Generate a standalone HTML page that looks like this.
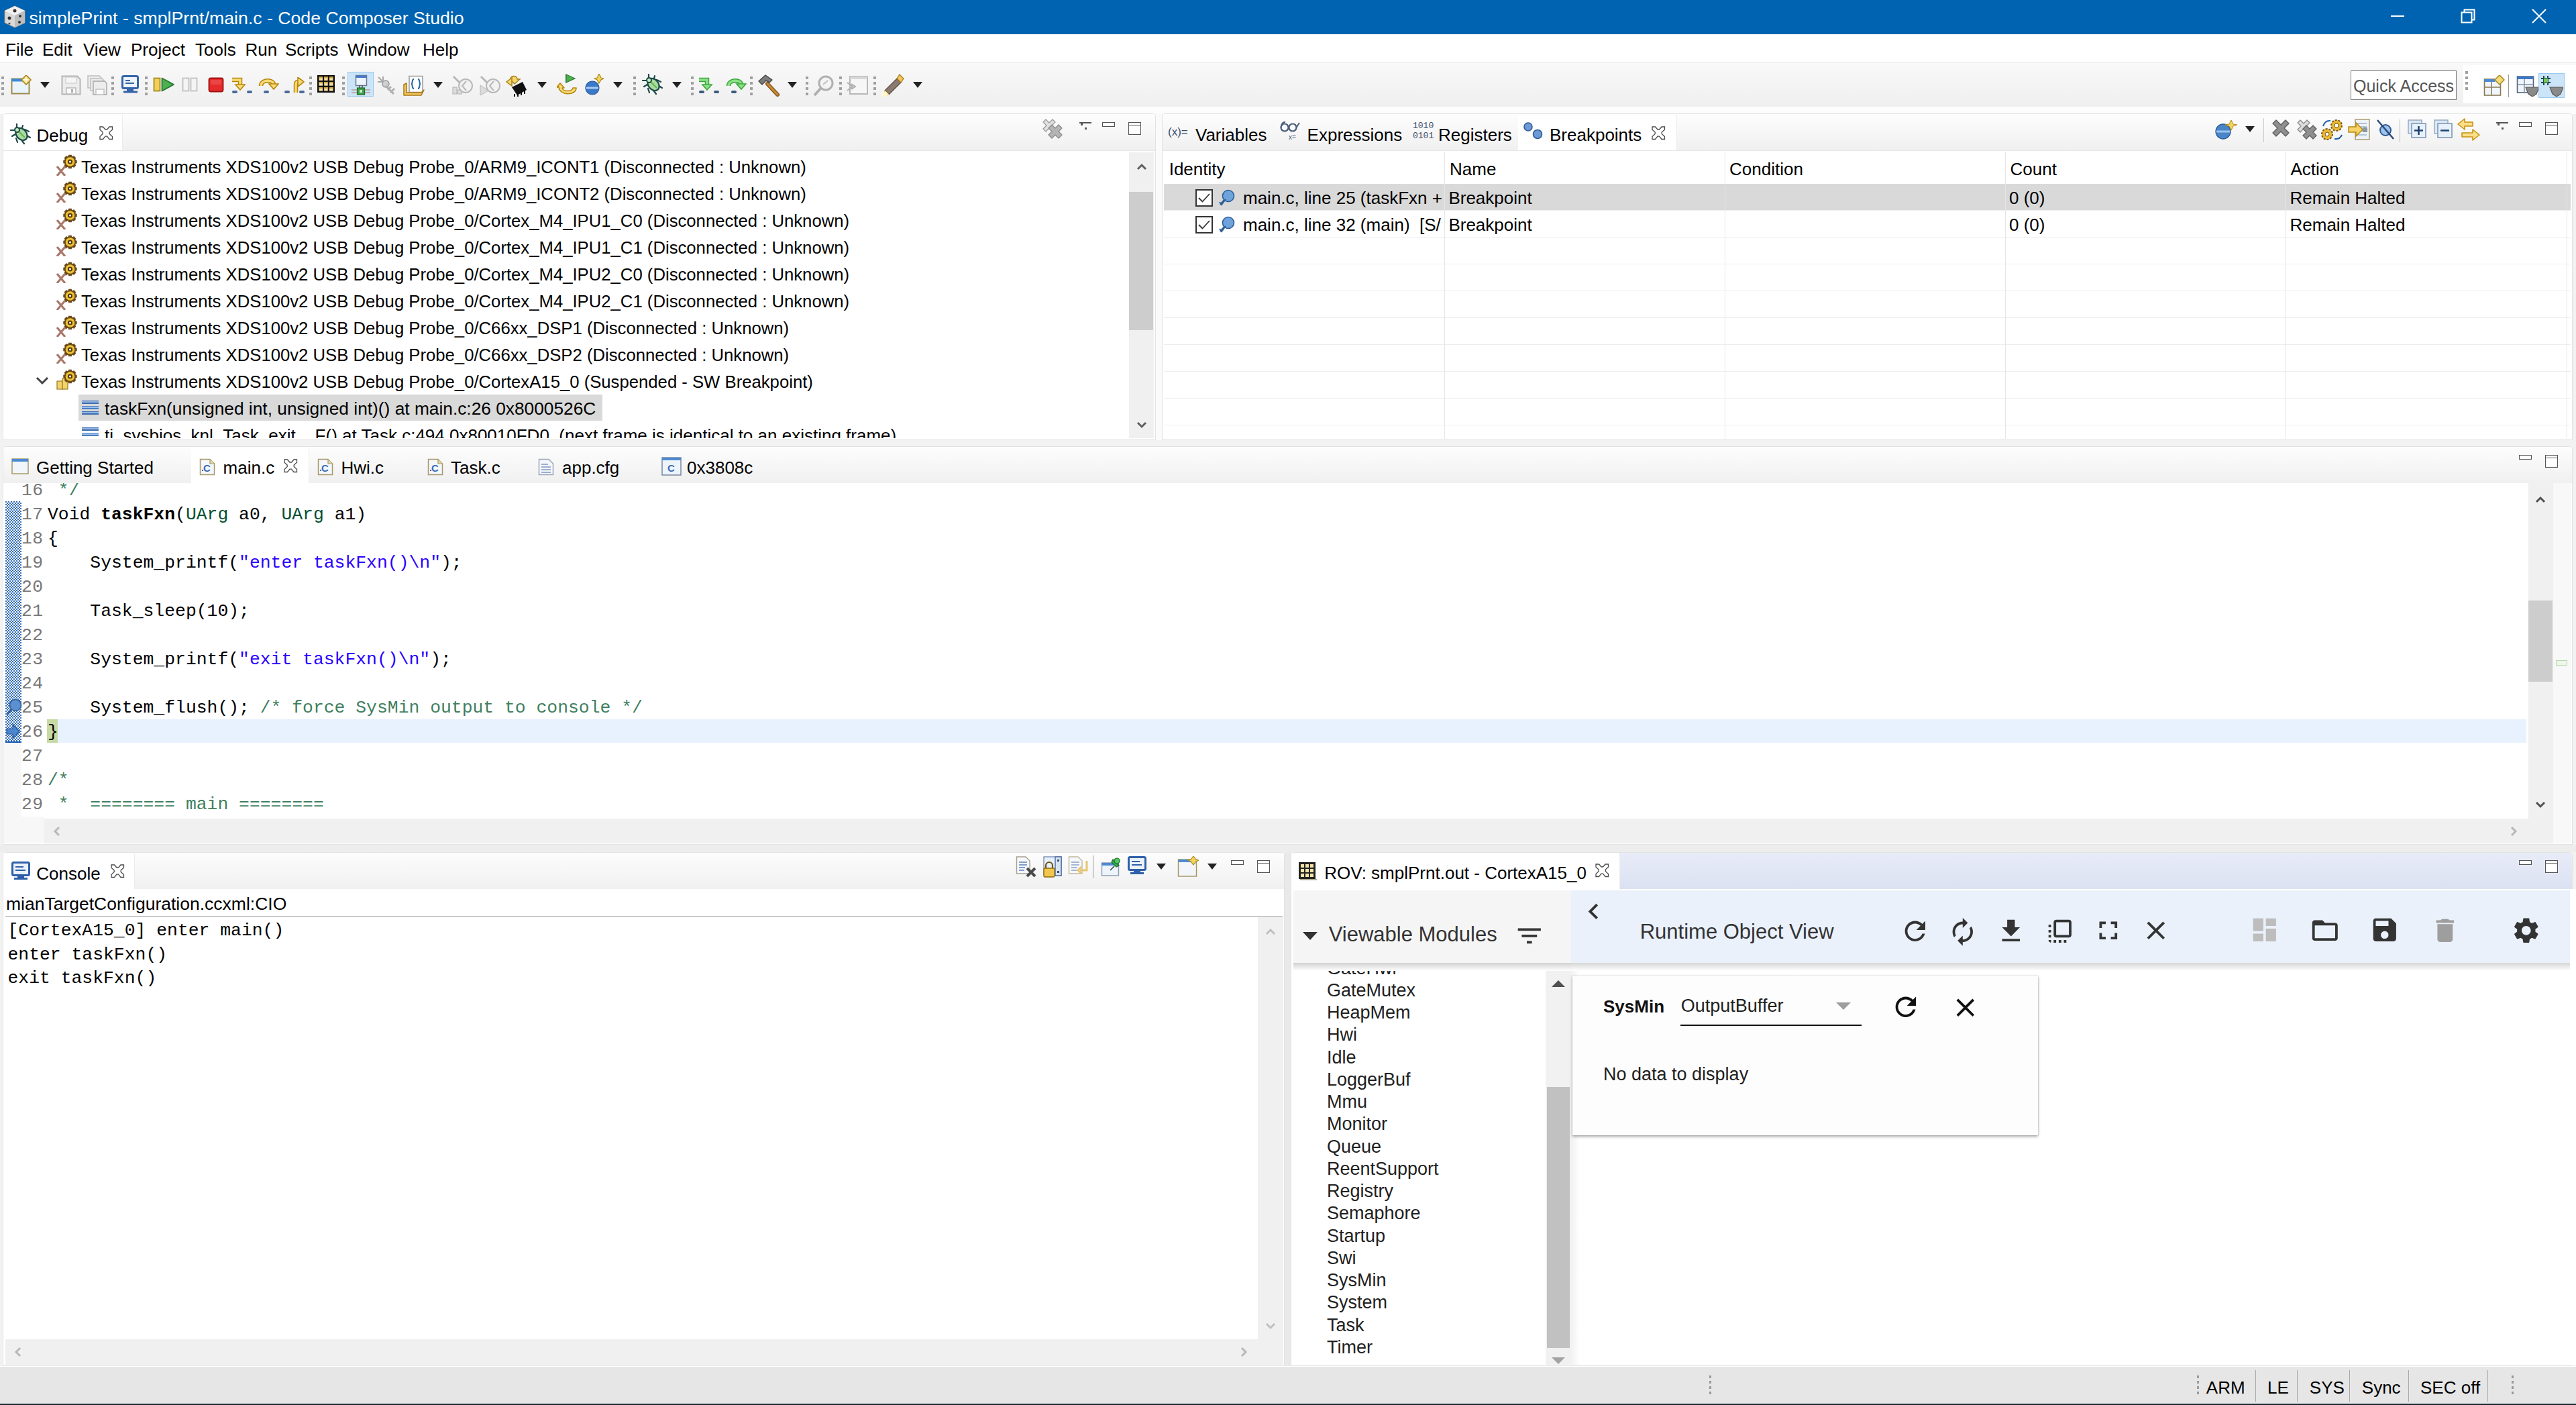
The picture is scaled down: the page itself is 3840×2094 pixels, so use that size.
<!DOCTYPE html>
<html><head><meta charset="utf-8"><title>Code Composer Studio</title>
<style>
html,body{margin:0;padding:0}
body{width:3840px;height:2094px;overflow:hidden;position:relative;background:#f2f2f2;font-family:"Liberation Sans",sans-serif}
.a{position:absolute}
.tS{position:absolute;white-space:pre;font-family:"Liberation Sans",sans-serif}
.tM{position:absolute;white-space:pre;font-family:"Liberation Mono",monospace}
</style></head><body>

<div class="a" style="left:0px;top:0px;width:3840px;height:51px;background:#0063b1"></div>
<svg class="a" style="left:4px;top:7px" width="36" height="36" viewBox="0 0 36 36"><path d="M18 2 L33 9 L33 27 L18 34 L3 27 L3 9 Z" fill="#d9d9d9" stroke="#8a8a8a" stroke-width="1"/>
<path d="M18 2 L33 9 L18 16 L3 9 Z" fill="#f2f2f2"/><path d="M18 16 L33 9 L33 27 L18 34 Z" fill="#bdbdbd"/>
<circle cx="18" cy="9" r="2.5" fill="#333"/><circle cx="10" cy="20" r="2.5" fill="#333"/><circle cx="26" cy="17" r="2" fill="#333"/><circle cx="25" cy="26" r="2" fill="#333"/><circle cx="10" cy="28" r="1.6" fill="#555"/></svg>
<div class="tS" style="left:43.5px;top:14.1px;font-size:26.7px;line-height:26.7px;color:#fff">simplePrint - smplPrnt/main.c - Code Composer Studio</div>
<div class="a" style="left:3564px;top:23px;width:20px;height:2px;background:#fff"></div>
<svg class="a" style="left:3666px;top:12px" width="26" height="26" viewBox="0 0 26 26"><rect x="3.5" y="6.5" width="15" height="15" fill="none" stroke="#fff" stroke-width="2"/><path d="M7.5 6.5 V2.5 H22.5 V17.5 H18.5" fill="none" stroke="#fff" stroke-width="2"/></svg>
<svg class="a" style="left:3773px;top:12px" width="24" height="24" viewBox="0 0 24 24"><path d="M2 2 L22 22 M22 2 L2 22" stroke="#fff" stroke-width="2"/></svg>
<div class="a" style="left:0px;top:51px;width:3840px;height:42px;background:#fff"></div>
<div class="tS" style="left:8.0px;top:61.0px;font-size:26px;line-height:26px">File</div>
<div class="tS" style="left:63.0px;top:61.0px;font-size:26px;line-height:26px">Edit</div>
<div class="tS" style="left:124.0px;top:61.0px;font-size:26px;line-height:26px">View</div>
<div class="tS" style="left:195.0px;top:61.0px;font-size:26px;line-height:26px">Project</div>
<div class="tS" style="left:291.0px;top:61.0px;font-size:26px;line-height:26px">Tools</div>
<div class="tS" style="left:365.5px;top:61.0px;font-size:26px;line-height:26px">Run</div>
<div class="tS" style="left:425.0px;top:61.0px;font-size:26px;line-height:26px">Scripts</div>
<div class="tS" style="left:518.0px;top:61.0px;font-size:26px;line-height:26px">Window</div>
<div class="tS" style="left:630.0px;top:61.0px;font-size:26px;line-height:26px">Help</div>
<div class="a" style="left:0px;top:93px;width:3840px;height:66px;background:linear-gradient(#f9f9f9,#efefef);border-top:1px solid #ececec;box-sizing:border-box"></div>
<div class="a" style="left:0px;top:159px;width:3840px;height:11px;background:#fdfdfd"></div>
<div class="a" style="left:2px;top:114px;width:4px;height:4px;background:#a0a0a0"></div>
<div class="a" style="left:2px;top:122px;width:4px;height:4px;background:#a0a0a0"></div>
<div class="a" style="left:2px;top:130px;width:4px;height:4px;background:#a0a0a0"></div>
<div class="a" style="left:2px;top:138px;width:4px;height:4px;background:#a0a0a0"></div>
<svg class="a" style="left:16px;top:112px" width="31" height="29" viewBox="0 0 31 29"><rect x="1.5" y="5.5" width="26" height="22" fill="#eaf4fc" stroke="#a08a50" stroke-width="2"/><rect x="1.5" y="5.5" width="20" height="4" fill="#3f8ad8"/><path d="M23 0 L30 7 L23 14 L16 7 Z" fill="#f6dc78" stroke="#a88820" stroke-width="1.6"/><path d="M23 3 V11 M19 7 H27" stroke="#fff" stroke-width="1.5"/></svg>
<svg class="a" style="left:60px;top:122px" width="14" height="9" viewBox="0 0 14 9"><path d="M0 0 H14 L7 9 Z" fill="#222"/></svg>
<svg class="a" style="left:91px;top:112px" width="30" height="30" viewBox="0 0 30 30"><path d="M1.5 1.5 H24 L28.5 6 V28.5 H1.5 Z" fill="#ececec" stroke="#b5b5b5" stroke-width="2"/><rect x="7" y="3" width="16" height="9" fill="#f6f6f6" stroke="#c8c8c8"/><rect x="8" y="19" width="14" height="9" fill="#fafafa" stroke="#b8b8b8" stroke-width="1.5"/><rect x="15" y="21" width="3" height="5" fill="#b0b0b0"/></svg>
<svg class="a" style="left:130px;top:112px" width="30" height="30" viewBox="0 0 30 30"><path d="M1 1 H18 L21 4 V19 H1 Z" fill="#ececec" stroke="#c0c0c0" stroke-width="1.5"/><path d="M5 5 H22 L25 8 V23 H5 Z" fill="#ececec" stroke="#c0c0c0" stroke-width="1.5"/><path d="M9 9 H26 L29 12 V29 H9 Z" fill="#ececec" stroke="#b5b5b5" stroke-width="1.8"/><rect x="13" y="21" width="12" height="8" fill="#fafafa" stroke="#b8b8b8" stroke-width="1.2"/></svg>
<div class="a" style="left:166px;top:114px;width:4px;height:4px;background:#a0a0a0"></div>
<div class="a" style="left:166px;top:122px;width:4px;height:4px;background:#a0a0a0"></div>
<div class="a" style="left:166px;top:130px;width:4px;height:4px;background:#a0a0a0"></div>
<div class="a" style="left:166px;top:138px;width:4px;height:4px;background:#a0a0a0"></div>
<svg class="a" style="left:181px;top:112px" width="27" height="27" viewBox="0 0 27 27"><rect x="1.5" y="1.5" width="23" height="18" rx="2" fill="#eef4fb" stroke="#3565a8" stroke-width="3"/><path d="M6 8 H13 M6 12 H19" stroke="#3565a8" stroke-width="2"/><rect x="8" y="21" width="10" height="3" fill="#3565a8"/><rect x="3" y="23.5" width="21" height="3" fill="#3565a8"/></svg>
<div class="a" style="left:216px;top:114px;width:4px;height:4px;background:#a0a0a0"></div>
<div class="a" style="left:216px;top:122px;width:4px;height:4px;background:#a0a0a0"></div>
<div class="a" style="left:216px;top:130px;width:4px;height:4px;background:#a0a0a0"></div>
<div class="a" style="left:216px;top:138px;width:4px;height:4px;background:#a0a0a0"></div>
<svg class="a" style="left:228px;top:115px" width="33" height="22" viewBox="0 0 33 22"><rect x="1.5" y="1.5" width="9" height="19" fill="#f2cf5a" stroke="#a88a20" stroke-width="1.8"/><path d="M13.5 1.5 L31 11 L13.5 20.5 Z" fill="#4caf50" stroke="#2a7a30" stroke-width="1.8" stroke-linejoin="round"/></svg>
<svg class="a" style="left:271px;top:115px" width="24" height="22" viewBox="0 0 24 22"><rect x="1.5" y="1.5" width="9" height="19" fill="#f4f4f4" stroke="#c0c0c0" stroke-width="1.8"/><rect x="13.5" y="1.5" width="9" height="19" fill="#f4f4f4" stroke="#c0c0c0" stroke-width="1.8"/></svg>
<svg class="a" style="left:310px;top:115px" width="24" height="23" viewBox="0 0 24 23"><rect x="1.5" y="1.5" width="21" height="20" rx="2.5" fill="#e52a2a" stroke="#a01010" stroke-width="1.8"/><rect x="4" y="4" width="16" height="7" fill="#f05858" opacity="0.6"/></svg>
<svg class="a" style="left:345px;top:115px" width="32" height="25" viewBox="0 0 32 25"><path d="M1 4 H13 V12" fill="none" stroke="#b8860b" stroke-width="6.5" stroke-linejoin="miter"/><path d="M1 4 H13 V12" fill="none" stroke="#f8dc78" stroke-width="3.5" stroke-linejoin="miter"/><path d="M6 11 H20 L13 19 Z" fill="#f8dc78" stroke="#b8860b" stroke-width="1.6" stroke-linejoin="miter"/><rect x="1" y="20" width="8" height="4" rx="2" fill="#4a6a9a"/><rect x="23" y="20" width="8" height="4" rx="2" fill="#4a6a9a"/></svg>
<svg class="a" style="left:384px;top:115px" width="32" height="25" viewBox="0 0 32 25"><path d="M5 13 C5 3 24 3 24 11" fill="none" stroke="#b8860b" stroke-width="6.5" stroke-linejoin="miter"/><path d="M5 13 C5 3 24 3 24 11" fill="none" stroke="#f8dc78" stroke-width="3.5" stroke-linejoin="miter"/><path d="M17 10 H31 L24 18 Z" fill="#f8dc78" stroke="#b8860b" stroke-width="1.6" stroke-linejoin="miter"/><rect x="9" y="20" width="8" height="4" rx="2" fill="#4a6a9a"/></svg>
<svg class="a" style="left:423px;top:115px" width="32" height="25" viewBox="0 0 32 25"><path d="M18 23 V11 C18 8 19 7 22 7" fill="none" stroke="#b8860b" stroke-width="6.5" stroke-linejoin="miter"/><path d="M18 23 V11 C18 8 19 7 22 7" fill="none" stroke="#f8dc78" stroke-width="3.5" stroke-linejoin="miter"/><path d="M21 0 L30 7 L21 14 Z" fill="#f8dc78" stroke="#b8860b" stroke-width="1.6" stroke-linejoin="miter"/><rect x="1" y="20" width="8" height="4" rx="2" fill="#4a6a9a"/><rect x="23" y="20" width="8" height="4" rx="2" fill="#4a6a9a"/></svg>
<div class="a" style="left:461px;top:114px;width:4px;height:4px;background:#a0a0a0"></div>
<div class="a" style="left:461px;top:122px;width:4px;height:4px;background:#a0a0a0"></div>
<div class="a" style="left:461px;top:130px;width:4px;height:4px;background:#a0a0a0"></div>
<div class="a" style="left:461px;top:138px;width:4px;height:4px;background:#a0a0a0"></div>
<svg class="a" style="left:472px;top:111px" width="29" height="29" viewBox="0 0 29 29"><rect x="1" y="1" width="26" height="26" fill="#111"/><g fill="#f6e2a6"><rect x="3.5" y="3.5" width="5.5" height="5.5"/><rect x="11.2" y="3.5" width="5.5" height="5.5"/><rect x="19" y="3.5" width="5.5" height="5.5"/><rect x="3.5" y="11.2" width="5.5" height="5.5"/><rect x="11.2" y="11.2" width="5.5" height="5.5"/><rect x="19" y="11.2" width="5.5" height="5.5"/><rect x="3.5" y="19" width="5.5" height="5.5"/><rect x="11.2" y="19" width="5.5" height="5.5"/><rect x="19" y="19" width="5.5" height="5.5"/></g><g fill="#d4a63a"><rect x="3.5" y="3.5" width="5.5" height="2"/><rect x="11.2" y="3.5" width="5.5" height="2"/><rect x="19" y="3.5" width="5.5" height="2"/><rect x="3.5" y="11.2" width="5.5" height="2"/><rect x="11.2" y="11.2" width="5.5" height="2"/><rect x="19" y="11.2" width="5.5" height="2"/><rect x="3.5" y="19" width="5.5" height="2"/><rect x="11.2" y="19" width="5.5" height="2"/><rect x="19" y="19" width="5.5" height="2"/></g></svg>
<div class="a" style="left:510px;top:114px;width:4px;height:4px;background:#a0a0a0"></div>
<div class="a" style="left:510px;top:122px;width:4px;height:4px;background:#a0a0a0"></div>
<div class="a" style="left:510px;top:130px;width:4px;height:4px;background:#a0a0a0"></div>
<div class="a" style="left:510px;top:138px;width:4px;height:4px;background:#a0a0a0"></div>
<div class="a" style="left:518px;top:107px;width:39px;height:37px;box-sizing:border-box;background:#cce4f7;border:1px solid #99c9ef"></div>
<svg class="a" style="left:522px;top:110px" width="32" height="32" viewBox="0 0 32 32"><rect x="8.5" y="2.5" width="16" height="15" fill="#eef4fb" stroke="#6a7a90" stroke-width="1.5"/><rect x="8.5" y="2.5" width="16" height="3.5" fill="#4a7ac8"/><path d="M2 24 H30 M2 28 H30" stroke="#b89a9a" stroke-width="1.5"/><path d="M14 17 V22 M18 17 V22" stroke="#555" stroke-width="1.5"/><rect x="10.5" y="21" width="11" height="10" fill="#3aa04a" stroke="#1e6a2a" stroke-width="1.2"/><rect x="14" y="24" width="4" height="4" fill="#cfe8c0"/></svg>
<svg class="a" style="left:561px;top:112px" width="32" height="30" viewBox="0 0 32 30"><path d="M3 3 L12 12 M10 2 V8 M2 10 H8" stroke="#a8a8a8" stroke-width="2"/><circle cx="14" cy="13" r="5" fill="#d0d0d0" stroke="#9a9a9a" stroke-width="1.5"/><path d="M14 16 L26 28 M17 22 L22 17 M21 26 L27 20" stroke="#b0b0b0" stroke-width="3"/></svg>
<svg class="a" style="left:601px;top:112px" width="32" height="31" viewBox="0 0 32 31"><rect x="9" y="1.5" width="20" height="24" fill="#fff" stroke="#9a9a9a" stroke-width="1.5"/><path d="M16 6 C12 6 15 13 12 13 C15 13 12 20 16 20 M22 6 C26 6 23 13 26 13 C23 13 26 20 22 20" fill="none" stroke="#1f6aa8" stroke-width="2"/><path d="M1 30 V14 L5 12 V26 H27 L31 22 L27 30 Z" fill="#f2c85a" stroke="#a8781a" stroke-width="1.5" stroke-linejoin="round"/></svg>
<svg class="a" style="left:646px;top:122px" width="14" height="9" viewBox="0 0 14 9"><path d="M0 0 H14 L7 9 Z" fill="#222"/></svg>
<svg class="a" style="left:673px;top:112px" width="35" height="31" viewBox="0 0 35 31"><path d="M3 2 L12 11" stroke="#b8b8b8" stroke-width="3"/><rect x="2" y="18" width="6" height="10" fill="#dcdcdc" stroke="#b0b0b0"/><rect x="9" y="22" width="6" height="6" fill="#dcdcdc" stroke="#b0b0b0"/><circle cx="21" cy="16" r="10" fill="#f2f2f2" stroke="#b8b8b8" stroke-width="2"/><path d="M22 9 L16 16 L22 23" fill="none" stroke="#b8b8b8" stroke-width="2"/></svg>
<svg class="a" style="left:714px;top:112px" width="33" height="31" viewBox="0 0 33 31"><path d="M3 2 L12 11" stroke="#b8b8b8" stroke-width="3"/><path d="M2 15 L14 23 L2 30 Z" fill="#dcdcdc" stroke="#b8b8b8"/><circle cx="21" cy="16" r="10" fill="#f2f2f2" stroke="#b8b8b8" stroke-width="2"/><path d="M22 9 L16 16 L22 23" fill="none" stroke="#b8b8b8" stroke-width="2"/></svg>
<svg class="a" style="left:753px;top:110px" width="34" height="34" viewBox="0 0 34 34"><path d="M8 8 C8 2 18 2 18 8 H22 L14 15 L8 9 Z" fill="#f6d86a" stroke="#a8801a" stroke-width="1.5"/><path d="M2 12 L10 6 L10 18 Z" fill="#f6d86a" stroke="#a8801a" stroke-width="1.5"/><path d="M10 20 L26 12 L32 24 L18 32 Z" fill="#111"/><path d="M14 30 V34 M19 29 V34 M24 27 V32 M29 25 V30" stroke="#111" stroke-width="2"/></svg>
<svg class="a" style="left:801px;top:122px" width="14" height="9" viewBox="0 0 14 9"><path d="M0 0 H14 L7 9 Z" fill="#222"/></svg>
<svg class="a" style="left:830px;top:109px" width="32" height="35" viewBox="0 0 32 35"><path d="M14 2 V14" stroke="#2a7a30" stroke-width="2"/><path d="M14 2 L27 8 L14 14 Z" fill="#4caf50" stroke="#2a7a30" stroke-width="1.2"/><path d="M3 20 C3 34 29 34 29 22 L24 22 C24 28 8 28 8 22 L11 22 L5 15 L-1 22 Z" fill="#f8dc78" stroke="#b8860b" stroke-width="1.6" stroke-linejoin="round"/></svg>
<svg class="a" style="left:872px;top:110px" width="28" height="34" viewBox="0 0 28 34"><circle cx="11" cy="21" r="10" fill="#3b78c8" stroke="#2a5a9a" stroke-width="1.2"/><path d="M2 21 H20" stroke="#a8cdf2" stroke-width="3"/><path d="M21 0 L24 6 L28 7 L24 9 L21 14 L18 9 L14 7 L18 6 Z" fill="#f4d35e" stroke="#a88a20" stroke-width="1.2"/></svg>
<svg class="a" style="left:914px;top:122px" width="14" height="9" viewBox="0 0 14 9"><path d="M0 0 H14 L7 9 Z" fill="#222"/></svg>
<div class="a" style="left:944px;top:114px;width:4px;height:4px;background:#a0a0a0"></div>
<div class="a" style="left:944px;top:122px;width:4px;height:4px;background:#a0a0a0"></div>
<div class="a" style="left:944px;top:130px;width:4px;height:4px;background:#a0a0a0"></div>
<div class="a" style="left:944px;top:138px;width:4px;height:4px;background:#a0a0a0"></div>
<svg class="a" style="left:957px;top:110px" width="32" height="32" viewBox="0 0 32 32"><g stroke="#1d4848" stroke-width="2.2" fill="none" stroke-linecap="round"><path d="M10 1 V8"/><path d="M19 3 Q19 6 16 9"/><path d="M1 10 H7"/><path d="M3 19 L8 16"/><path d="M9 22 L11 28"/><path d="M18 26 L21 30"/><path d="M22 9 L28 12"/><path d="M25 18 L30 21"/></g><ellipse cx="17" cy="16" rx="7.5" ry="10" transform="rotate(-40 17 16)" fill="#a8dca0" stroke="#1d4848" stroke-width="2.2"/><path d="M12 11 L22 21" stroke="#6ab04c" stroke-width="2"/><circle cx="10.5" cy="9.5" r="3.5" fill="#c8eec0" stroke="#1d4848" stroke-width="2"/></svg>
<svg class="a" style="left:1002px;top:122px" width="14" height="9" viewBox="0 0 14 9"><path d="M0 0 H14 L7 9 Z" fill="#222"/></svg>
<div class="a" style="left:1030px;top:114px;width:4px;height:4px;background:#a0a0a0"></div>
<div class="a" style="left:1030px;top:122px;width:4px;height:4px;background:#a0a0a0"></div>
<div class="a" style="left:1030px;top:130px;width:4px;height:4px;background:#a0a0a0"></div>
<div class="a" style="left:1030px;top:138px;width:4px;height:4px;background:#a0a0a0"></div>
<svg class="a" style="left:1041px;top:115px" width="32" height="25" viewBox="0 0 32 25"><path d="M1 4 H13 V12" fill="none" stroke="#3aa83a" stroke-width="6.5" stroke-linejoin="miter"/><path d="M1 4 H13 V12" fill="none" stroke="#8ee08a" stroke-width="3.5" stroke-linejoin="miter"/><path d="M6 11 H20 L13 19 Z" fill="#8ee08a" stroke="#3aa83a" stroke-width="1.6" stroke-linejoin="miter"/><rect x="1" y="20" width="8" height="4" rx="2" fill="#3a5a7a"/><rect x="23" y="20" width="8" height="4" rx="2" fill="#3a5a7a"/></svg>
<svg class="a" style="left:1081px;top:115px" width="32" height="25" viewBox="0 0 32 25"><path d="M5 13 C5 3 24 3 24 11" fill="none" stroke="#3aa83a" stroke-width="6.5" stroke-linejoin="miter"/><path d="M5 13 C5 3 24 3 24 11" fill="none" stroke="#8ee08a" stroke-width="3.5" stroke-linejoin="miter"/><path d="M17 10 H31 L24 18 Z" fill="#8ee08a" stroke="#3aa83a" stroke-width="1.6" stroke-linejoin="miter"/><rect x="9" y="20" width="8" height="4" rx="2" fill="#3a5a7a"/></svg>
<div class="a" style="left:1118px;top:114px;width:4px;height:4px;background:#a0a0a0"></div>
<div class="a" style="left:1118px;top:122px;width:4px;height:4px;background:#a0a0a0"></div>
<div class="a" style="left:1118px;top:130px;width:4px;height:4px;background:#a0a0a0"></div>
<div class="a" style="left:1118px;top:138px;width:4px;height:4px;background:#a0a0a0"></div>
<svg class="a" style="left:1129px;top:111px" width="33" height="33" viewBox="0 0 33 33"><path d="M15 14 L30 30" stroke="#8a5a20" stroke-width="6" stroke-linecap="round"/><path d="M15 14 L30 30" stroke="#c8883a" stroke-width="3" stroke-linecap="round"/><path d="M2 10 L12 1 L22 8 L18 12 L13 9 L7 15 Z" fill="#7a7a7a" stroke="#4a4a4a" stroke-width="1.5" stroke-linejoin="round"/></svg>
<svg class="a" style="left:1174px;top:122px" width="14" height="9" viewBox="0 0 14 9"><path d="M0 0 H14 L7 9 Z" fill="#222"/></svg>
<div class="a" style="left:1201px;top:114px;width:4px;height:4px;background:#a0a0a0"></div>
<div class="a" style="left:1201px;top:122px;width:4px;height:4px;background:#a0a0a0"></div>
<div class="a" style="left:1201px;top:130px;width:4px;height:4px;background:#a0a0a0"></div>
<div class="a" style="left:1201px;top:138px;width:4px;height:4px;background:#a0a0a0"></div>
<svg class="a" style="left:1212px;top:111px" width="33" height="33" viewBox="0 0 33 33"><circle cx="19" cy="13" r="10" fill="#f4f4f4" stroke="#b0b0b0" stroke-width="3"/><path d="M12 20 L2 31" stroke="#b0b0b0" stroke-width="4"/><path d="M15 15 L22 9" stroke="#c0c0c0" stroke-width="2"/></svg>
<div class="a" style="left:1251px;top:114px;width:4px;height:4px;background:#a0a0a0"></div>
<div class="a" style="left:1251px;top:122px;width:4px;height:4px;background:#a0a0a0"></div>
<div class="a" style="left:1251px;top:130px;width:4px;height:4px;background:#a0a0a0"></div>
<div class="a" style="left:1251px;top:138px;width:4px;height:4px;background:#a0a0a0"></div>
<svg class="a" style="left:1261px;top:111px" width="34" height="32" viewBox="0 0 34 32"><rect x="6" y="3" width="26" height="26" fill="#f6f6f6" stroke="#b8b8b8" stroke-width="2"/><rect x="6" y="3" width="26" height="4" fill="#d8d8d8"/><path d="M2 12 L10 18 L2 24 M8 14 L14 18 L8 22" fill="none" stroke="#b0b0b0" stroke-width="2"/></svg>
<div class="a" style="left:1302px;top:114px;width:4px;height:4px;background:#a0a0a0"></div>
<div class="a" style="left:1302px;top:122px;width:4px;height:4px;background:#a0a0a0"></div>
<div class="a" style="left:1302px;top:130px;width:4px;height:4px;background:#a0a0a0"></div>
<div class="a" style="left:1302px;top:138px;width:4px;height:4px;background:#a0a0a0"></div>
<svg class="a" style="left:1313px;top:109px" width="35" height="36" viewBox="0 0 35 36"><path d="M6 26 L24 8 L30 14 L12 32 Z" fill="#8a7a70" stroke="#5a4a40" stroke-width="1.2"/><path d="M24 8 L28 2 L34 8 L30 14 Z" fill="#f2c45a" stroke="#a87a1a" stroke-width="1.2"/><path d="M6 26 L12 32 L3 35 Z" fill="#fff6b8" stroke="#e8d070"/><circle cx="5" cy="32" r="4" fill="#fffbd8" opacity="0.8"/></svg>
<svg class="a" style="left:1361px;top:122px" width="14" height="9" viewBox="0 0 14 9"><path d="M0 0 H14 L7 9 Z" fill="#222"/></svg>
<div class="a" style="left:3504px;top:105px;width:158px;height:44px;box-sizing:border-box;background:#fff;border:1px solid #7a7a7a"></div>
<div class="tS" style="left:3508.0px;top:115.8px;font-size:25px;line-height:25px;color:#555">Quick Access</div>
<div class="a" style="left:3672px;top:97px;width:168px;height:57px;background:#fff"></div>
<div class="a" style="left:3675px;top:106px;width:4px;height:4px;background:#a0a0a0"></div>
<div class="a" style="left:3675px;top:114px;width:4px;height:4px;background:#a0a0a0"></div>
<div class="a" style="left:3675px;top:122px;width:4px;height:4px;background:#a0a0a0"></div>
<div class="a" style="left:3675px;top:130px;width:4px;height:4px;background:#a0a0a0"></div>
<div class="a" style="left:3739px;top:111px;width:1px;height:34px;background:#9a9a9a"></div>
<svg class="a" style="left:3702px;top:112px" width="32" height="32" viewBox="0 0 32 32"><rect x="1.5" y="6" width="24" height="24" fill="#f0f6fb" stroke="#8a7a50" stroke-width="1.6"/><rect x="1.5" y="6" width="16" height="4" fill="#4d8ad0"/><path d="M1.5 18 H25 M12 10 V30" stroke="#8a7a50" stroke-width="1.5"/><path d="M24 0 L31 7 L24 14 L17 7 Z" fill="#f6dc78" stroke="#a88820" stroke-width="1.5"/></svg>
<svg class="a" style="left:3751px;top:112px" width="34" height="32" viewBox="0 0 34 32"><rect x="1.5" y="2" width="24" height="24" fill="#f0f6fb" stroke="#55627a" stroke-width="1.6"/><rect x="1.5" y="2" width="24" height="4" fill="#3b78c8"/><path d="M1.5 14 H25 M12 6 V26" stroke="#8090a8" stroke-width="1.5"/><path d="M14 18 L34 18 L30 28 L24 32 L18 28 Z" fill="#8a8a8a" stroke="#5a5a5a" stroke-width="1.2"/></svg>
<div class="a" style="left:3784px;top:109px;width:39px;height:37px;box-sizing:border-box;background:#cce4f7;border:1px solid #99c9ef"></div>
<svg class="a" style="left:3787px;top:112px" width="34" height="32" viewBox="0 0 34 32"><path d="M5 1 V15 M11 1 V15 M1 5 H15 M1 11 H15" stroke="#1a4a4a" stroke-width="2"/><rect x="5" y="5" width="6" height="6" fill="#7ac858"/><path d="M14 18 L34 18 L30 28 L24 32 L18 28 Z" fill="#8a8a8a" stroke="#5a5a5a" stroke-width="1.2"/></svg>
<div class="a" style="left:4px;top:169px;width:1719px;height:487px;box-sizing:border-box;border:1px solid #e2e2e2;border-radius:5px 5px 0 0;background:#fff"></div>
<div class="a" style="left:5px;top:170px;width:1717px;height:54px;border-radius:4px 4px 0 0;background:linear-gradient(#fdfdfd,#f0f0f0);border-bottom:1px solid #e6e6e6"></div>
<div class="a" style="left:5px;top:170px;width:177px;height:54px;background:#fff;border-radius:4px 4px 0 0;border-right:1px solid #ececec"></div>
<svg class="a" style="left:15px;top:184px" width="32" height="32" viewBox="0 0 32 32"><g stroke="#1d4848" stroke-width="2.2" fill="none" stroke-linecap="round"><path d="M10 1 V8"/><path d="M19 3 Q19 6 16 9"/><path d="M1 10 H7"/><path d="M3 19 L8 16"/><path d="M9 22 L11 28"/><path d="M18 26 L21 30"/><path d="M22 9 L28 12"/><path d="M25 18 L30 21"/></g><ellipse cx="17" cy="16" rx="7.5" ry="10" transform="rotate(-40 17 16)" fill="#a8dca0" stroke="#1d4848" stroke-width="2.2"/><path d="M12 11 L22 21" stroke="#6ab04c" stroke-width="2"/><circle cx="10.5" cy="9.5" r="3.5" fill="#c8eec0" stroke="#1d4848" stroke-width="2"/></svg>
<div class="tS" style="left:54.6px;top:188.5px;font-size:26px;line-height:26px">Debug</div>
<svg class="a" style="left:148px;top:188px" width="21" height="21" viewBox="0 0 21 21"><path d="M1 1 H5.5 L9 5 H11.5 L15 1 H19.5 V5.2 L15.2 9 V11.5 L19.5 15.5 V19.5 H15 L11.5 15.2 H9 L5.5 19.5 H1 V15.5 L5.2 11.5 V9 L1 5.2 Z" fill="#fff" stroke="#4a4a4a" stroke-width="1.3" stroke-linejoin="miter"/></svg>
<svg class="a" style="left:83px;top:230px" width="32" height="32" viewBox="0 0 32 32"><path d="M14 20 L17 17" stroke="#a07060" stroke-width="3"/><path d="M2 18 L14 32 M14 18 L2 32" stroke="#a87868" stroke-width="3.2"/><path d="M18.9 2.6 L19.2 0.8 L23.8 0.8 L24.1 2.6 L25.6 3.2 L27.1 2.1 L30.4 5.4 L29.3 6.9 L29.9 8.4 L31.7 8.7 L31.7 13.3 L29.9 13.6 L29.3 15.1 L30.4 16.6 L27.1 19.9 L25.6 18.8 L24.1 19.4 L23.8 21.2 L19.2 21.2 L18.9 19.4 L17.4 18.8 L15.9 19.9 L12.6 16.6 L13.7 15.1 L13.1 13.6 L11.3 13.3 L11.3 8.7 L13.1 8.4 L13.7 6.9 L12.6 5.4 L15.9 2.1 L17.4 3.2 Z" fill="#6b4a1a"/><circle cx="21.5" cy="11" r="6.8" fill="#eec434"/><circle cx="21.5" cy="11" r="3.6" fill="#5a3a10"/><circle cx="21.5" cy="11" r="1.5" fill="#fff"/></svg>
<div class="tS" style="left:121.0px;top:237.3px;font-size:25.7px;line-height:25.7px">Texas Instruments XDS100v2 USB Debug Probe_0/ARM9_ICONT1 (Disconnected : Unknown)</div>
<svg class="a" style="left:83px;top:270px" width="32" height="32" viewBox="0 0 32 32"><path d="M14 20 L17 17" stroke="#a07060" stroke-width="3"/><path d="M2 18 L14 32 M14 18 L2 32" stroke="#a87868" stroke-width="3.2"/><path d="M18.9 2.6 L19.2 0.8 L23.8 0.8 L24.1 2.6 L25.6 3.2 L27.1 2.1 L30.4 5.4 L29.3 6.9 L29.9 8.4 L31.7 8.7 L31.7 13.3 L29.9 13.6 L29.3 15.1 L30.4 16.6 L27.1 19.9 L25.6 18.8 L24.1 19.4 L23.8 21.2 L19.2 21.2 L18.9 19.4 L17.4 18.8 L15.9 19.9 L12.6 16.6 L13.7 15.1 L13.1 13.6 L11.3 13.3 L11.3 8.7 L13.1 8.4 L13.7 6.9 L12.6 5.4 L15.9 2.1 L17.4 3.2 Z" fill="#6b4a1a"/><circle cx="21.5" cy="11" r="6.8" fill="#eec434"/><circle cx="21.5" cy="11" r="3.6" fill="#5a3a10"/><circle cx="21.5" cy="11" r="1.5" fill="#fff"/></svg>
<div class="tS" style="left:121.0px;top:277.3px;font-size:25.7px;line-height:25.7px">Texas Instruments XDS100v2 USB Debug Probe_0/ARM9_ICONT2 (Disconnected : Unknown)</div>
<svg class="a" style="left:83px;top:310px" width="32" height="32" viewBox="0 0 32 32"><path d="M14 20 L17 17" stroke="#a07060" stroke-width="3"/><path d="M2 18 L14 32 M14 18 L2 32" stroke="#a87868" stroke-width="3.2"/><path d="M18.9 2.6 L19.2 0.8 L23.8 0.8 L24.1 2.6 L25.6 3.2 L27.1 2.1 L30.4 5.4 L29.3 6.9 L29.9 8.4 L31.7 8.7 L31.7 13.3 L29.9 13.6 L29.3 15.1 L30.4 16.6 L27.1 19.9 L25.6 18.8 L24.1 19.4 L23.8 21.2 L19.2 21.2 L18.9 19.4 L17.4 18.8 L15.9 19.9 L12.6 16.6 L13.7 15.1 L13.1 13.6 L11.3 13.3 L11.3 8.7 L13.1 8.4 L13.7 6.9 L12.6 5.4 L15.9 2.1 L17.4 3.2 Z" fill="#6b4a1a"/><circle cx="21.5" cy="11" r="6.8" fill="#eec434"/><circle cx="21.5" cy="11" r="3.6" fill="#5a3a10"/><circle cx="21.5" cy="11" r="1.5" fill="#fff"/></svg>
<div class="tS" style="left:121.0px;top:317.3px;font-size:25.7px;line-height:25.7px">Texas Instruments XDS100v2 USB Debug Probe_0/Cortex_M4_IPU1_C0 (Disconnected : Unknown)</div>
<svg class="a" style="left:83px;top:350px" width="32" height="32" viewBox="0 0 32 32"><path d="M14 20 L17 17" stroke="#a07060" stroke-width="3"/><path d="M2 18 L14 32 M14 18 L2 32" stroke="#a87868" stroke-width="3.2"/><path d="M18.9 2.6 L19.2 0.8 L23.8 0.8 L24.1 2.6 L25.6 3.2 L27.1 2.1 L30.4 5.4 L29.3 6.9 L29.9 8.4 L31.7 8.7 L31.7 13.3 L29.9 13.6 L29.3 15.1 L30.4 16.6 L27.1 19.9 L25.6 18.8 L24.1 19.4 L23.8 21.2 L19.2 21.2 L18.9 19.4 L17.4 18.8 L15.9 19.9 L12.6 16.6 L13.7 15.1 L13.1 13.6 L11.3 13.3 L11.3 8.7 L13.1 8.4 L13.7 6.9 L12.6 5.4 L15.9 2.1 L17.4 3.2 Z" fill="#6b4a1a"/><circle cx="21.5" cy="11" r="6.8" fill="#eec434"/><circle cx="21.5" cy="11" r="3.6" fill="#5a3a10"/><circle cx="21.5" cy="11" r="1.5" fill="#fff"/></svg>
<div class="tS" style="left:121.0px;top:357.3px;font-size:25.7px;line-height:25.7px">Texas Instruments XDS100v2 USB Debug Probe_0/Cortex_M4_IPU1_C1 (Disconnected : Unknown)</div>
<svg class="a" style="left:83px;top:390px" width="32" height="32" viewBox="0 0 32 32"><path d="M14 20 L17 17" stroke="#a07060" stroke-width="3"/><path d="M2 18 L14 32 M14 18 L2 32" stroke="#a87868" stroke-width="3.2"/><path d="M18.9 2.6 L19.2 0.8 L23.8 0.8 L24.1 2.6 L25.6 3.2 L27.1 2.1 L30.4 5.4 L29.3 6.9 L29.9 8.4 L31.7 8.7 L31.7 13.3 L29.9 13.6 L29.3 15.1 L30.4 16.6 L27.1 19.9 L25.6 18.8 L24.1 19.4 L23.8 21.2 L19.2 21.2 L18.9 19.4 L17.4 18.8 L15.9 19.9 L12.6 16.6 L13.7 15.1 L13.1 13.6 L11.3 13.3 L11.3 8.7 L13.1 8.4 L13.7 6.9 L12.6 5.4 L15.9 2.1 L17.4 3.2 Z" fill="#6b4a1a"/><circle cx="21.5" cy="11" r="6.8" fill="#eec434"/><circle cx="21.5" cy="11" r="3.6" fill="#5a3a10"/><circle cx="21.5" cy="11" r="1.5" fill="#fff"/></svg>
<div class="tS" style="left:121.0px;top:397.3px;font-size:25.7px;line-height:25.7px">Texas Instruments XDS100v2 USB Debug Probe_0/Cortex_M4_IPU2_C0 (Disconnected : Unknown)</div>
<svg class="a" style="left:83px;top:430px" width="32" height="32" viewBox="0 0 32 32"><path d="M14 20 L17 17" stroke="#a07060" stroke-width="3"/><path d="M2 18 L14 32 M14 18 L2 32" stroke="#a87868" stroke-width="3.2"/><path d="M18.9 2.6 L19.2 0.8 L23.8 0.8 L24.1 2.6 L25.6 3.2 L27.1 2.1 L30.4 5.4 L29.3 6.9 L29.9 8.4 L31.7 8.7 L31.7 13.3 L29.9 13.6 L29.3 15.1 L30.4 16.6 L27.1 19.9 L25.6 18.8 L24.1 19.4 L23.8 21.2 L19.2 21.2 L18.9 19.4 L17.4 18.8 L15.9 19.9 L12.6 16.6 L13.7 15.1 L13.1 13.6 L11.3 13.3 L11.3 8.7 L13.1 8.4 L13.7 6.9 L12.6 5.4 L15.9 2.1 L17.4 3.2 Z" fill="#6b4a1a"/><circle cx="21.5" cy="11" r="6.8" fill="#eec434"/><circle cx="21.5" cy="11" r="3.6" fill="#5a3a10"/><circle cx="21.5" cy="11" r="1.5" fill="#fff"/></svg>
<div class="tS" style="left:121.0px;top:437.3px;font-size:25.7px;line-height:25.7px">Texas Instruments XDS100v2 USB Debug Probe_0/Cortex_M4_IPU2_C1 (Disconnected : Unknown)</div>
<svg class="a" style="left:83px;top:470px" width="32" height="32" viewBox="0 0 32 32"><path d="M14 20 L17 17" stroke="#a07060" stroke-width="3"/><path d="M2 18 L14 32 M14 18 L2 32" stroke="#a87868" stroke-width="3.2"/><path d="M18.9 2.6 L19.2 0.8 L23.8 0.8 L24.1 2.6 L25.6 3.2 L27.1 2.1 L30.4 5.4 L29.3 6.9 L29.9 8.4 L31.7 8.7 L31.7 13.3 L29.9 13.6 L29.3 15.1 L30.4 16.6 L27.1 19.9 L25.6 18.8 L24.1 19.4 L23.8 21.2 L19.2 21.2 L18.9 19.4 L17.4 18.8 L15.9 19.9 L12.6 16.6 L13.7 15.1 L13.1 13.6 L11.3 13.3 L11.3 8.7 L13.1 8.4 L13.7 6.9 L12.6 5.4 L15.9 2.1 L17.4 3.2 Z" fill="#6b4a1a"/><circle cx="21.5" cy="11" r="6.8" fill="#eec434"/><circle cx="21.5" cy="11" r="3.6" fill="#5a3a10"/><circle cx="21.5" cy="11" r="1.5" fill="#fff"/></svg>
<div class="tS" style="left:121.0px;top:477.3px;font-size:25.7px;line-height:25.7px">Texas Instruments XDS100v2 USB Debug Probe_0/C66xx_DSP1 (Disconnected : Unknown)</div>
<svg class="a" style="left:83px;top:510px" width="32" height="32" viewBox="0 0 32 32"><path d="M14 20 L17 17" stroke="#a07060" stroke-width="3"/><path d="M2 18 L14 32 M14 18 L2 32" stroke="#a87868" stroke-width="3.2"/><path d="M18.9 2.6 L19.2 0.8 L23.8 0.8 L24.1 2.6 L25.6 3.2 L27.1 2.1 L30.4 5.4 L29.3 6.9 L29.9 8.4 L31.7 8.7 L31.7 13.3 L29.9 13.6 L29.3 15.1 L30.4 16.6 L27.1 19.9 L25.6 18.8 L24.1 19.4 L23.8 21.2 L19.2 21.2 L18.9 19.4 L17.4 18.8 L15.9 19.9 L12.6 16.6 L13.7 15.1 L13.1 13.6 L11.3 13.3 L11.3 8.7 L13.1 8.4 L13.7 6.9 L12.6 5.4 L15.9 2.1 L17.4 3.2 Z" fill="#6b4a1a"/><circle cx="21.5" cy="11" r="6.8" fill="#eec434"/><circle cx="21.5" cy="11" r="3.6" fill="#5a3a10"/><circle cx="21.5" cy="11" r="1.5" fill="#fff"/></svg>
<div class="tS" style="left:121.0px;top:517.3px;font-size:25.7px;line-height:25.7px">Texas Instruments XDS100v2 USB Debug Probe_0/C66xx_DSP2 (Disconnected : Unknown)</div>
<svg class="a" style="left:53px;top:561px" width="20" height="14" viewBox="0 0 20 14"><path d="M2 2 L10 10 L18 2" fill="none" stroke="#444" stroke-width="3"/></svg>
<svg class="a" style="left:83px;top:550px" width="32" height="32" viewBox="0 0 32 32"><rect x="2" y="18" width="8" height="12" fill="#f3d36a" stroke="#9a7a20" stroke-width="1.2"/><rect x="10" y="14" width="8" height="16" fill="#f3d36a" stroke="#9a7a20" stroke-width="1.2"/><path d="M18.9 2.6 L19.2 0.8 L23.8 0.8 L24.1 2.6 L25.6 3.2 L27.1 2.1 L30.4 5.4 L29.3 6.9 L29.9 8.4 L31.7 8.7 L31.7 13.3 L29.9 13.6 L29.3 15.1 L30.4 16.6 L27.1 19.9 L25.6 18.8 L24.1 19.4 L23.8 21.2 L19.2 21.2 L18.9 19.4 L17.4 18.8 L15.9 19.9 L12.6 16.6 L13.7 15.1 L13.1 13.6 L11.3 13.3 L11.3 8.7 L13.1 8.4 L13.7 6.9 L12.6 5.4 L15.9 2.1 L17.4 3.2 Z" fill="#6b4a1a"/><circle cx="21.5" cy="11" r="6.8" fill="#eec434"/><circle cx="21.5" cy="11" r="3.6" fill="#5a3a10"/><circle cx="21.5" cy="11" r="1.5" fill="#fff"/></svg>
<div class="tS" style="left:121.0px;top:556.8px;font-size:25.7px;line-height:25.7px">Texas Instruments XDS100v2 USB Debug Probe_0/CortexA15_0 (Suspended - SW Breakpoint)</div>
<div class="a" style="left:117px;top:588px;width:781px;height:39px;background:#d9d9d9"></div>
<svg class="a" style="left:122px;top:595px" width="26" height="24" viewBox="0 0 26 24"><rect x="0" y="2" width="25" height="5" fill="#3d6eb0"/><rect x="0" y="10" width="25" height="5" fill="#4a7fc4"/><rect x="0" y="18" width="25" height="5" fill="#3d6eb0"/><rect x="0" y="3" width="25" height="2" fill="#8fb3e3"/><rect x="0" y="11" width="25" height="2" fill="#9cc0ec"/><rect x="0" y="19" width="25" height="2" fill="#8fb3e3"/></svg>
<div class="tS" style="left:156.0px;top:595.8px;font-size:26.3px;line-height:26.3px">taskFxn(unsigned int, unsigned int)() at main.c:26 0x8000526C</div>
<div class="a" style="left:100px;top:628px;width:1580px;height:25px;overflow:hidden">
<svg class="a" style="left:22px;top:7px" width="26" height="24" viewBox="0 0 26 24"><rect x="0" y="2" width="25" height="5" fill="#3d6eb0"/><rect x="0" y="10" width="25" height="5" fill="#4a7fc4"/><rect x="0" y="18" width="25" height="5" fill="#3d6eb0"/><rect x="0" y="3" width="25" height="2" fill="#8fb3e3"/><rect x="0" y="11" width="25" height="2" fill="#9cc0ec"/><rect x="0" y="19" width="25" height="2" fill="#8fb3e3"/></svg>
<div class="tS" style="left:56.0px;top:7.5px;font-size:26px;line-height:26px">ti_sysbios_knl_Task_exit__F() at Task.c:494 0x80010FD0  (next frame is identical to an existing frame)</div>
</div>
<div class="a" style="left:1683px;top:227px;width:37px;height:426px;background:#f0f0f0"></div>
<div class="a" style="left:1683px;top:286px;width:36px;height:206px;background:#cdcdcd"></div>
<svg class="a" style="left:1694px;top:242px" width="16" height="12" viewBox="0 0 16 12"><path d="M2 10 L8 4 L14 10" fill="none" stroke="#606060" stroke-width="3"/></svg>
<svg class="a" style="left:1694px;top:628px" width="16" height="12" viewBox="0 0 16 12"><path d="M2 2 L8 8 L14 2" fill="none" stroke="#606060" stroke-width="3"/></svg>
<svg class="a" style="left:1552px;top:175px" width="34" height="34" viewBox="0 0 34 34"><path d="M3 7 L7 3 L12 8 L17 3 L21 7 L16 12 L21 17 L17 21 L12 16 L7 21 L3 17 L8 12 Z" fill="#e0e0e0" stroke="#9a9a9a" stroke-width="1.3" stroke-linejoin="round"/><path d="M11 16 L16 11 L21 16 L26 11 L31 16 L26 21 L31 26 L26 31 L21 26 L16 31 L11 26 L16 21 Z" fill="#b4b4b4" stroke="#8a8a8a" stroke-width="1.3" stroke-linejoin="round"/></svg>
<div class="a" style="left:1609px;top:182px;width:18px;height:2px;background:#555"></div>
<div class="a" style="left:1611px;top:184px;width:3px;height:3px;background:#555"></div>
<div class="a" style="left:1617px;top:190px;width:3px;height:3px;background:#555"></div>
<div class="a" style="left:1643px;top:182px;width:19px;height:7px;box-sizing:border-box;border:1px solid #555;background:#fff"></div>
<div class="a" style="left:1682px;top:182px;width:19px;height:19px;box-sizing:border-box;border:1px solid #555;background:#fff"></div>
<div class="a" style="left:1682px;top:186px;width:19px;height:1px;background:#555"></div>
<div class="a" style="left:1723px;top:169px;width:9px;height:487px;background:#fafafa"></div>
<div class="a" style="left:1732px;top:169px;width:2103px;height:487px;box-sizing:border-box;border:1px solid #e2e2e2;border-radius:5px 5px 0 0;background:#fff"></div>
<div class="a" style="left:1733px;top:170px;width:2101px;height:54px;border-radius:4px 4px 0 0;background:linear-gradient(#fdfdfd,#f0f0f0);border-bottom:1px solid #e6e6e6"></div>
<div class="a" style="left:2263px;top:170px;width:236px;height:54px;background:#fff;border-radius:4px 4px 0 0;border-right:1px solid #ececec"></div>
<div class="tS" style="left:1741.0px;top:187.6px;font-size:17px;line-height:17px;color:#3a4a6a">(x)=</div>
<div class="tS" style="left:1782.0px;top:188.0px;font-size:26px;line-height:26px">Variables</div>
<svg class="a" style="left:1907px;top:178px" width="34" height="32" viewBox="0 0 34 32"><circle cx="8" cy="12" r="5.5" fill="none" stroke="#4b5d78" stroke-width="2.2"/><circle cx="20" cy="12" r="5.5" fill="none" stroke="#4b5d78" stroke-width="2.2"/><path d="M2.5 12 Q4 3 9 4 M25.5 12 L30 5" fill="none" stroke="#4b5d78" stroke-width="2"/><text x="14" y="30" font-size="10" fill="#4b5d78" font-family="Liberation Sans">x=</text></svg>
<div class="tS" style="left:1948.6px;top:188.0px;font-size:26px;line-height:26px">Expressions</div>
<div class="tM" style="left:2106.0px;top:181.0px;font-size:13px;line-height:13px;color:#3a4a6a">1010</div>
<div class="tM" style="left:2106.0px;top:196.0px;font-size:13px;line-height:13px;color:#3a4a6a">0101</div>
<div class="tS" style="left:2144.0px;top:188.0px;font-size:26px;line-height:26px">Registers</div>
<svg class="a" style="left:2270px;top:180px" width="32" height="30" viewBox="0 0 32 30"><circle cx="8" cy="9" r="6" fill="#6c9ad6" stroke="#2e5b94" stroke-width="1.6"/><circle cx="22" cy="20" r="6.5" fill="#6c9ad6" stroke="#2e5b94" stroke-width="1.6"/></svg>
<div class="tS" style="left:2310.0px;top:188.0px;font-size:26px;line-height:26px">Breakpoints</div>
<svg class="a" style="left:2462px;top:188px" width="21" height="21" viewBox="0 0 21 21"><path d="M1 1 H5.5 L9 5 H11.5 L15 1 H19.5 V5.2 L15.2 9 V11.5 L19.5 15.5 V19.5 H15 L11.5 15.2 H9 L5.5 19.5 H1 V15.5 L5.2 11.5 V9 L1 5.2 Z" fill="#fff" stroke="#4a4a4a" stroke-width="1.3" stroke-linejoin="miter"/></svg>
<svg class="a" style="left:3300px;top:176px" width="36" height="36" viewBox="0 0 36 36"><circle cx="14" cy="20" r="11" fill="#4a85c8" stroke="#2d5f99" stroke-width="1.4"/><path d="M4 20 H24" stroke="#9cc3ee" stroke-width="3"/><path d="M26 3 L29 9 L35 10 L29 12 L26 18 L23 12 L17 10 L23 9 Z" fill="#f4d35e" stroke="#b08a1a" stroke-width="1"/></svg>
<svg class="a" style="left:3347px;top:188px" width="14" height="10" viewBox="0 0 14 10"><path d="M0 0 H14 L7 9 Z" fill="#222"/></svg>
<div class="a" style="left:3374px;top:176px;width:1px;height:36px;background:#c9c9c9"></div>
<svg class="a" style="left:3385px;top:176px" width="30" height="32" viewBox="0 0 30 32"><path d="M3 8 L8 3 L15 10 L22 3 L27 8 L20 15 L27 22 L22 27 L15 20 L8 27 L3 22 L10 15 Z" fill="#8f8f8f" stroke="#5e5e5e" stroke-width="1.4" stroke-linejoin="round"/></svg>
<svg class="a" style="left:3422px;top:176px" width="34" height="34" viewBox="0 0 34 34"><path d="M3 7 L7 3 L12 8 L17 3 L21 7 L16 12 L21 17 L17 21 L12 16 L7 21 L3 17 L8 12 Z" fill="#dcdcdc" stroke="#8a8a8a" stroke-width="1.3" stroke-linejoin="round"/><path d="M11 16 L16 11 L21 16 L26 11 L31 16 L26 21 L31 26 L26 31 L21 26 L16 31 L11 26 L16 21 Z" fill="#8f8f8f" stroke="#5e5e5e" stroke-width="1.3" stroke-linejoin="round"/></svg>
<svg class="a" style="left:3460px;top:176px" width="34" height="34" viewBox="0 0 34 34"><g transform="translate(23,11)"><circle r="8" fill="#e8b838" stroke="#7a5510" stroke-width="2" stroke-dasharray="3 2"/><circle r="3" fill="#fff" stroke="#7a5510"/></g><g transform="translate(9,24)"><circle r="8" fill="#e8b838" stroke="#7a5510" stroke-width="2" stroke-dasharray="3 2"/><circle r="3" fill="#fff" stroke="#7a5510"/></g><path d="M3 12 Q6 3 14 4" fill="none" stroke="#1f5ea8" stroke-width="2"/><path d="M20 31 Q28 32 31 25" fill="none" stroke="#1f5ea8" stroke-width="2"/></svg>
<svg class="a" style="left:3500px;top:176px" width="34" height="34" viewBox="0 0 34 34"><rect x="11" y="2" width="21" height="30" fill="#eef3f8" stroke="#a8946a" stroke-width="1.4"/><path d="M14 8 H28 M14 13 H28 M20 19 H28 M14 25 H28" stroke="#9ab4d0" stroke-width="1.5"/><path d="M1 13 H12 V7 L22 17 L12 27 V21 H1 Z" fill="#f6d46a" stroke="#b8880f" stroke-width="1.5"/><rect x="22" y="14" width="7" height="7" fill="#8a98a8"/></svg>
<svg class="a" style="left:3542px;top:176px" width="28" height="34" viewBox="0 0 28 34"><circle cx="14" cy="18" r="8" fill="#9cc4ec" stroke="#2e5b94" stroke-width="2"/><path d="M2 3 L26 31" stroke="#2e4a7a" stroke-width="2.5"/></svg>
<div class="a" style="left:3577px;top:178px;width:1px;height:34px;background:#b9b9b9"></div>
<svg class="a" style="left:3589px;top:178px" width="28" height="30" viewBox="0 0 28 30"><rect x="1" y="1" width="20" height="20" fill="#dbe8f5" stroke="#9aabc0" stroke-width="1.5"/><rect x="6" y="6" width="21" height="21" fill="#e7f1fb" stroke="#7a93b3" stroke-width="1.5"/><path d="M10 16.5 H23 M16.5 10 V23" stroke="#1f3f6e" stroke-width="2.5"/></svg>
<svg class="a" style="left:3628px;top:178px" width="28" height="30" viewBox="0 0 28 30"><rect x="1" y="1" width="20" height="20" fill="#dbe8f5" stroke="#9aabc0" stroke-width="1.5"/><rect x="6" y="6" width="21" height="21" fill="#e7f1fb" stroke="#7a93b3" stroke-width="1.5"/><path d="M10 16.5 H23" stroke="#1f3f6e" stroke-width="2.5"/></svg>
<svg class="a" style="left:3663px;top:176px" width="34" height="34" viewBox="0 0 34 34"><path d="M1 9 L11 1 V6 H23 V12 H11 V17 Z" fill="#f8df88" stroke="#c8920f" stroke-width="1.6" stroke-linejoin="round"/><path d="M33 25 L23 33 V28 H7 V22 H23 V17 Z" fill="#f8df88" stroke="#c8920f" stroke-width="1.6" stroke-linejoin="round"/></svg>
<div class="a" style="left:3721px;top:182px;width:18px;height:2px;background:#555"></div>
<div class="a" style="left:3723px;top:184px;width:3px;height:3px;background:#555"></div>
<div class="a" style="left:3729px;top:190px;width:3px;height:3px;background:#555"></div>
<div class="a" style="left:3755px;top:182px;width:19px;height:7px;box-sizing:border-box;border:1px solid #555;background:#fff"></div>
<div class="a" style="left:3794px;top:182px;width:19px;height:19px;box-sizing:border-box;border:1px solid #555;background:#fff"></div>
<div class="a" style="left:3794px;top:186px;width:19px;height:1px;background:#555"></div>
<div class="a" style="left:1735px;top:225px;width:2097px;height:429px;background:#fff"></div>
<div class="a" style="left:1735px;top:313px;width:2097px;height:1px;background:#ededed"></div>
<div class="a" style="left:1735px;top:353px;width:2097px;height:1px;background:#ededed"></div>
<div class="a" style="left:1735px;top:393px;width:2097px;height:1px;background:#ededed"></div>
<div class="a" style="left:1735px;top:433px;width:2097px;height:1px;background:#ededed"></div>
<div class="a" style="left:1735px;top:473px;width:2097px;height:1px;background:#ededed"></div>
<div class="a" style="left:1735px;top:513px;width:2097px;height:1px;background:#ededed"></div>
<div class="a" style="left:1735px;top:553px;width:2097px;height:1px;background:#ededed"></div>
<div class="a" style="left:1735px;top:593px;width:2097px;height:1px;background:#ededed"></div>
<div class="a" style="left:1735px;top:633px;width:2097px;height:1px;background:#ededed"></div>
<div class="a" style="left:1735px;top:274px;width:2097px;height:39px;background:#d9d9d9"></div>
<div class="a" style="left:2153px;top:226px;width:1px;height:428px;background:#e6e6e6"></div>
<div class="a" style="left:2571px;top:226px;width:1px;height:428px;background:#e6e6e6"></div>
<div class="a" style="left:2989px;top:226px;width:1px;height:428px;background:#e6e6e6"></div>
<div class="a" style="left:3407px;top:226px;width:1px;height:428px;background:#e6e6e6"></div>
<div class="a" style="left:3826px;top:226px;width:1px;height:428px;background:#e6e6e6"></div>
<div class="tS" style="left:1742.7px;top:239.0px;font-size:26px;line-height:26px">Identity</div>
<div class="tS" style="left:2161.0px;top:239.0px;font-size:26px;line-height:26px">Name</div>
<div class="tS" style="left:2578.0px;top:239.0px;font-size:26px;line-height:26px">Condition</div>
<div class="tS" style="left:2996.5px;top:239.0px;font-size:26px;line-height:26px">Count</div>
<div class="tS" style="left:3414.5px;top:239.0px;font-size:26px;line-height:26px">Action</div>
<svg class="a" style="left:1782px;top:282px" width="26" height="26" viewBox="0 0 26 26"><rect x="1" y="1" width="24" height="24" fill="#fff" stroke="#333" stroke-width="2"/><path d="M5 13 L10.5 18.5 L21 7" fill="none" stroke="#333" stroke-width="1.8"/></svg>
<svg class="a" style="left:1816px;top:281px" width="26" height="28" viewBox="0 0 26 28"><circle cx="15" cy="11" r="8.5" fill="#6ea3dc" stroke="#2c5e98" stroke-width="1.6"/><path d="M9 17 L3 24" stroke="#2c5e98" stroke-width="2.5"/><path d="M2 20 L5 24 L11 16" fill="none" stroke="#2c5e98" stroke-width="2"/></svg>
<div class="a" style="left:1850px;top:274px;width:302px;height:40px;overflow:hidden">
<div class="tS" style="left:3.0px;top:8.0px;font-size:26px;line-height:26px">main.c, line 25 (taskFxn +</div>
</div>
<div class="tS" style="left:2159.4px;top:282.0px;font-size:26px;line-height:26px">Breakpoint</div>
<div class="tS" style="left:2995.0px;top:282.0px;font-size:26px;line-height:26px">0 (0)</div>
<div class="tS" style="left:3413.5px;top:282.0px;font-size:26px;line-height:26px">Remain Halted</div>
<svg class="a" style="left:1782px;top:322px" width="26" height="26" viewBox="0 0 26 26"><rect x="1" y="1" width="24" height="24" fill="#fff" stroke="#333" stroke-width="2"/><path d="M5 13 L10.5 18.5 L21 7" fill="none" stroke="#333" stroke-width="1.8"/></svg>
<svg class="a" style="left:1816px;top:321px" width="26" height="28" viewBox="0 0 26 28"><circle cx="15" cy="11" r="8.5" fill="#6ea3dc" stroke="#2c5e98" stroke-width="1.6"/><path d="M9 17 L3 24" stroke="#2c5e98" stroke-width="2.5"/><path d="M2 20 L5 24 L11 16" fill="none" stroke="#2c5e98" stroke-width="2"/></svg>
<div class="a" style="left:1850px;top:314px;width:302px;height:40px;overflow:hidden">
<div class="tS" style="left:3.0px;top:8.0px;font-size:26px;line-height:26px">main.c, line 32 (main)  [S/</div>
</div>
<div class="tS" style="left:2159.4px;top:322.0px;font-size:26px;line-height:26px">Breakpoint</div>
<div class="tS" style="left:2995.0px;top:322.0px;font-size:26px;line-height:26px">0 (0)</div>
<div class="tS" style="left:3413.5px;top:322.0px;font-size:26px;line-height:26px">Remain Halted</div>
<div class="a" style="left:4px;top:665px;width:3831px;height:594px;box-sizing:border-box;border:1px solid #e2e2e2;border-radius:5px 5px 0 0;background:#fff"></div>
<div class="a" style="left:5px;top:666px;width:3829px;height:54px;border-radius:4px 4px 0 0;background:linear-gradient(#fdfdfd,#f0f0f0);border-bottom:1px solid #e6e6e6"></div>
<div class="a" style="left:285px;top:666px;width:175px;height:54px;background:#fff;border-radius:4px 4px 0 0;border-right:1px solid #ececec"></div>
<svg class="a" style="left:17px;top:682px" width="26" height="26" viewBox="0 0 26 26"><rect x="1" y="2" width="24" height="22" fill="#f0f6fc" stroke="#a89868" stroke-width="1.5"/><rect x="1" y="2" width="24" height="4" fill="#4d8ad0"/></svg>
<div class="tS" style="left:54.0px;top:684.0px;font-size:26px;line-height:26px">Getting Started</div>
<svg class="a" style="left:297px;top:683px" width="24" height="26" viewBox="0 0 24 26"><path d="M1.5 1.5 H16 L22.5 8 V24.5 H1.5 Z" fill="#f4f7fb" stroke="#a89868" stroke-width="1.5"/><path d="M16 1.5 V8 H22.5" fill="#e8d9a8" stroke="#a89868" stroke-width="1.2"/><text x="6" y="20" font-size="15" font-weight="bold" fill="#3b6cb4" font-family="Liberation Sans">C</text><rect x="4" y="17" width="2" height="2" fill="#3b6cb4"/></svg>
<div class="tS" style="left:332.6px;top:684.0px;font-size:26px;line-height:26px">main.c</div>
<svg class="a" style="left:423px;top:684px" width="21" height="21" viewBox="0 0 21 21"><path d="M1 1 H5.5 L9 5 H11.5 L15 1 H19.5 V5.2 L15.2 9 V11.5 L19.5 15.5 V19.5 H15 L11.5 15.2 H9 L5.5 19.5 H1 V15.5 L5.2 11.5 V9 L1 5.2 Z" fill="#fff" stroke="#4a4a4a" stroke-width="1.3" stroke-linejoin="miter"/></svg>
<svg class="a" style="left:473px;top:683px" width="24" height="26" viewBox="0 0 24 26"><path d="M1.5 1.5 H16 L22.5 8 V24.5 H1.5 Z" fill="#f4f7fb" stroke="#a89868" stroke-width="1.5"/><path d="M16 1.5 V8 H22.5" fill="#e8d9a8" stroke="#a89868" stroke-width="1.2"/><text x="6" y="20" font-size="15" font-weight="bold" fill="#3b6cb4" font-family="Liberation Sans">C</text><rect x="4" y="17" width="2" height="2" fill="#3b6cb4"/></svg>
<div class="tS" style="left:508.5px;top:684.0px;font-size:26px;line-height:26px">Hwi.c</div>
<svg class="a" style="left:637px;top:683px" width="24" height="26" viewBox="0 0 24 26"><path d="M1.5 1.5 H16 L22.5 8 V24.5 H1.5 Z" fill="#f4f7fb" stroke="#a89868" stroke-width="1.5"/><path d="M16 1.5 V8 H22.5" fill="#e8d9a8" stroke="#a89868" stroke-width="1.2"/><text x="6" y="20" font-size="15" font-weight="bold" fill="#3b6cb4" font-family="Liberation Sans">C</text><rect x="4" y="17" width="2" height="2" fill="#3b6cb4"/></svg>
<div class="tS" style="left:672.0px;top:684.0px;font-size:26px;line-height:26px">Task.c</div>
<svg class="a" style="left:802px;top:683px" width="24" height="26" viewBox="0 0 24 26"><path d="M1.5 1.5 H16 L22.5 8 V24.5 H1.5 Z" fill="#f4f7fb" stroke="#9aa6b8" stroke-width="1.5"/><path d="M5 9 H15 M5 13 H19 M5 17 H19 M5 21 H19" stroke="#7d97c2" stroke-width="1.5"/></svg>
<div class="tS" style="left:838.0px;top:684.0px;font-size:26px;line-height:26px">app.cfg</div>
<svg class="a" style="left:986px;top:680px" width="30" height="30" viewBox="0 0 30 30"><rect x="1" y="2" width="28" height="26" fill="#eef4fb" stroke="#7a8aa0" stroke-width="1.5"/><rect x="1" y="2" width="28" height="4" fill="#4d8ad0"/><text x="9" y="23" font-size="15" font-weight="bold" fill="#3b6cb4" font-family="Liberation Sans">C</text></svg>
<div class="tS" style="left:1024.0px;top:684.0px;font-size:26px;line-height:26px">0x3808c</div>
<div class="a" style="left:3755px;top:678px;width:19px;height:7px;box-sizing:border-box;border:1px solid #555;background:#fff"></div>
<div class="a" style="left:3794px;top:678px;width:19px;height:19px;box-sizing:border-box;border:1px solid #555;background:#fff"></div>
<div class="a" style="left:3794px;top:682px;width:19px;height:1px;background:#555"></div>
<div class="a" style="left:5px;top:720px;width:3829px;height:538px;background:#fff"></div>
<div class="a" style="left:5px;top:720px;width:3764px;height:500px;overflow:hidden">
<div class="a" style="left:81px;top:351.5999999999999px;width:3680px;height:35px;background:#e8f2fe"></div>
<div class="a" style="left:65px;top:351.5999999999999px;width:16px;height:35px;background:#c7d9a5"></div>
<div class="a" style="left:3px;top:27px;width:24px;height:360px;background-color:#1458b0;background-image:linear-gradient(45deg,#fff 25%,transparent 25%,transparent 75%,#fff 75%),linear-gradient(45deg,#fff 25%,transparent 25%,transparent 75%,#fff 75%);background-size:4px 4px;background-position:0 0,2px 2px;opacity:0.85"></div>
<div class="a" style="left:3px;top:385px;width:24px;height:2px;background:#1458b0"></div>
<svg class="a" style="left:3px;top:320px" width="26" height="30" viewBox="0 0 26 30"><circle cx="15" cy="11" r="8.5" fill="#5b8fcf" stroke="#2c5e98" stroke-width="1.6"/><path d="M9 17 L3 25" stroke="#2c5e98" stroke-width="2.5"/></svg>
<svg class="a" style="left:3px;top:358.5999999999999px" width="24" height="22" viewBox="0 0 24 22"><path d="M2 7 H11 V1 L21 11 L11 21 V15 H2 Z" fill="#4b86cf" stroke="#2a5796" stroke-width="1.2"/></svg>
<div class="tM" style="left:27.0px;top:-2.5px;font-size:26.4px;line-height:26.4px;color:#787878;letter-spacing:0.5px">16</div>
<div class="tM" style="left:66.0px;top:-2.5px;font-size:26.4px;line-height:26.4px"><span style="color:#3f7f5f"> */</span></div>
<div class="tM" style="left:27.0px;top:33.5px;font-size:26.4px;line-height:26.4px;color:#787878;letter-spacing:0.5px">17</div>
<div class="tM" style="left:66.0px;top:33.5px;font-size:26.4px;line-height:26.4px"><span style="color:#000">Void </span><span style="color:#000;font-weight:bold">taskFxn</span><span style="color:#000">(</span><span style="color:#005032">UArg</span><span style="color:#000"> a0, </span><span style="color:#005032">UArg</span><span style="color:#000"> a1)</span></div>
<div class="tM" style="left:27.0px;top:69.5px;font-size:26.4px;line-height:26.4px;color:#787878;letter-spacing:0.5px">18</div>
<div class="tM" style="left:66.0px;top:69.5px;font-size:26.4px;line-height:26.4px"><span style="color:#000">{</span></div>
<div class="tM" style="left:27.0px;top:105.5px;font-size:26.4px;line-height:26.4px;color:#787878;letter-spacing:0.5px">19</div>
<div class="tM" style="left:66.0px;top:105.5px;font-size:26.4px;line-height:26.4px"><span style="color:#000">    System_printf(</span><span style="color:#2a00ff">&quot;enter taskFxn()\n&quot;</span><span style="color:#000">);</span></div>
<div class="tM" style="left:27.0px;top:141.5px;font-size:26.4px;line-height:26.4px;color:#787878;letter-spacing:0.5px">20</div>
<div class="tM" style="left:27.0px;top:177.5px;font-size:26.4px;line-height:26.4px;color:#787878;letter-spacing:0.5px">21</div>
<div class="tM" style="left:66.0px;top:177.5px;font-size:26.4px;line-height:26.4px"><span style="color:#000">    Task_sleep(10);</span></div>
<div class="tM" style="left:27.0px;top:213.5px;font-size:26.4px;line-height:26.4px;color:#787878;letter-spacing:0.5px">22</div>
<div class="tM" style="left:27.0px;top:249.5px;font-size:26.4px;line-height:26.4px;color:#787878;letter-spacing:0.5px">23</div>
<div class="tM" style="left:66.0px;top:249.5px;font-size:26.4px;line-height:26.4px"><span style="color:#000">    System_printf(</span><span style="color:#2a00ff">&quot;exit taskFxn()\n&quot;</span><span style="color:#000">);</span></div>
<div class="tM" style="left:27.0px;top:285.5px;font-size:26.4px;line-height:26.4px;color:#787878;letter-spacing:0.5px">24</div>
<div class="tM" style="left:27.0px;top:321.5px;font-size:26.4px;line-height:26.4px;color:#787878;letter-spacing:0.5px">25</div>
<div class="tM" style="left:66.0px;top:321.5px;font-size:26.4px;line-height:26.4px"><span style="color:#000">    System_flush(); </span><span style="color:#3f7f5f">/* force SysMin output to console */</span></div>
<div class="tM" style="left:27.0px;top:357.5px;font-size:26.4px;line-height:26.4px;color:#787878;letter-spacing:0.5px">26</div>
<div class="tM" style="left:66.0px;top:357.5px;font-size:26.4px;line-height:26.4px"><span style="color:#000">}</span></div>
<div class="tM" style="left:27.0px;top:393.5px;font-size:26.4px;line-height:26.4px;color:#787878;letter-spacing:0.5px">27</div>
<div class="tM" style="left:27.0px;top:429.5px;font-size:26.4px;line-height:26.4px;color:#787878;letter-spacing:0.5px">28</div>
<div class="tM" style="left:66.0px;top:429.5px;font-size:26.4px;line-height:26.4px"><span style="color:#3f7f5f">/*</span></div>
<div class="tM" style="left:27.0px;top:465.5px;font-size:26.4px;line-height:26.4px;color:#787878;letter-spacing:0.5px">29</div>
<div class="tM" style="left:66.0px;top:465.5px;font-size:26.4px;line-height:26.4px"><span style="color:#3f7f5f"> *  ======== main ========</span></div>
</div>
<div class="a" style="left:3769px;top:720px;width:37px;height:500px;background:#f0f0f0"></div>
<div class="a" style="left:3769px;top:895px;width:36px;height:121px;background:#cdcdcd"></div>
<svg class="a" style="left:3779px;top:738px" width="16" height="12" viewBox="0 0 16 12"><path d="M2 10 L8 4 L14 10" fill="none" stroke="#505050" stroke-width="3"/></svg>
<svg class="a" style="left:3779px;top:1194px" width="16" height="12" viewBox="0 0 16 12"><path d="M2 2 L8 8 L14 2" fill="none" stroke="#505050" stroke-width="3"/></svg>
<div class="a" style="left:3806px;top:720px;width:27px;height:537px;background:#f8f8f8"></div>
<div class="a" style="left:3810px;top:984px;width:17px;height:8px;box-sizing:border-box;border:1px solid #b5d6a8;background:#eef7ea"></div>
<div class="a" style="left:5px;top:1107px;width:27px;height:150px;background:#f7f7f7"></div>
<div class="a" style="left:5px;top:1217px;width:61px;height:40px;background:#f7f7f7"></div>
<div class="a" style="left:66px;top:1220px;width:3740px;height:37px;background:#f0f0f0"></div>
<svg class="a" style="left:78px;top:1231px" width="12" height="16" viewBox="0 0 12 16"><path d="M10 2 L4 8 L10 14" fill="none" stroke="#b8b8b8" stroke-width="3"/></svg>
<svg class="a" style="left:3742px;top:1231px" width="12" height="16" viewBox="0 0 12 16"><path d="M2 2 L8 8 L2 14" fill="none" stroke="#b8b8b8" stroke-width="3"/></svg>
<div class="a" style="left:0px;top:1259px;width:3840px;height:11px;background:#ededed"></div>
<div class="a" style="left:4px;top:1270px;width:1911px;height:766px;box-sizing:border-box;border:1px solid #e2e2e2;border-radius:5px 5px 0 0;background:#fff"></div>
<div class="a" style="left:5px;top:1271px;width:1909px;height:54px;border-radius:4px 4px 0 0;background:linear-gradient(#fdfdfd,#f0f0f0);border-bottom:1px solid #e6e6e6"></div>
<div class="a" style="left:5px;top:1271px;width:195px;height:54px;background:#fff;border-radius:4px 4px 0 0;border-right:1px solid #ececec"></div>
<svg class="a" style="left:17px;top:1284px" width="28" height="28" viewBox="0 0 28 28"><rect x="1.5" y="1.5" width="25" height="19" rx="2" fill="#eaf2fb" stroke="#2f5fa8" stroke-width="3"/><path d="M6 8 H18 M6 13 H21" stroke="#2f5fa8" stroke-width="2"/><rect x="9" y="21" width="10" height="3" fill="#2f5fa8"/><rect x="4" y="24" width="20" height="3" fill="#2f5fa8"/></svg>
<div class="tS" style="left:54.3px;top:1289.0px;font-size:26px;line-height:26px">Console</div>
<svg class="a" style="left:165px;top:1288px" width="21" height="21" viewBox="0 0 21 21"><path d="M1 1 H5.5 L9 5 H11.5 L15 1 H19.5 V5.2 L15.2 9 V11.5 L19.5 15.5 V19.5 H15 L11.5 15.2 H9 L5.5 19.5 H1 V15.5 L5.2 11.5 V9 L1 5.2 Z" fill="#fff" stroke="#4a4a4a" stroke-width="1.3" stroke-linejoin="miter"/></svg>
<svg class="a" style="left:1514px;top:1275px" width="34" height="34" viewBox="0 0 34 34"><path d="M1.5 2 H15 L21 8 V27 H1.5 Z" fill="#f6f8fb" stroke="#a8a090" stroke-width="1.4"/><path d="M5 10 H17 M5 14 H17 M5 18 H14 M5 22 H13" stroke="#5b7fc0" stroke-width="1.6"/><path d="M17 19 L29 31 M29 19 L17 31" stroke="#4a4a4a" stroke-width="4"/></svg>
<svg class="a" style="left:1553px;top:1275px" width="34" height="34" viewBox="0 0 34 34"><rect x="3" y="2" width="26" height="28" fill="#e8f1fb" stroke="#7a90b0" stroke-width="1.4"/><rect x="20" y="2" width="9" height="28" fill="#d8e4f2" stroke="#4a68a0" stroke-width="1.4"/><rect x="23" y="6" width="3" height="3" fill="#2a4a80"/><rect x="23" y="23" width="3" height="3" fill="#2a4a80"/><path d="M6 19 V15 A5 5 0 0 1 16 15 V19" fill="none" stroke="#6e5418" stroke-width="2.2"/><rect x="3" y="19" width="16" height="13" rx="1.5" fill="#f2c64b" stroke="#8a6a10" stroke-width="1.3"/></svg>
<svg class="a" style="left:1592px;top:1275px" width="34" height="34" viewBox="0 0 34 34"><path d="M1.5 2 H15 L21 8 V27 H1.5 Z" fill="#f6f8fb" stroke="#c0b8a0" stroke-width="1.4"/><path d="M5 10 H17 M5 14 H17 M5 18 H14 M5 22 H13" stroke="#8aa0c8" stroke-width="1.6"/><path d="M28 8 V22 H18" fill="none" stroke="#e8c670" stroke-width="3"/><path d="M20 17 L15 22 L20 27" fill="none" stroke="#e8c670" stroke-width="3"/></svg>
<div class="a" style="left:1629px;top:1275px;width:1px;height:34px;background:#9a9a9a"></div>
<svg class="a" style="left:1641px;top:1277px" width="30" height="30" viewBox="0 0 30 30"><rect x="1.5" y="9" width="25" height="19" fill="#eef4fb" stroke="#8a9ab0" stroke-width="1.4"/><rect x="1.5" y="9" width="25" height="4" fill="#4d8ad0"/><path d="M14 20 L20 14" stroke="#333" stroke-width="1.5"/><path d="M18 4 L27 13 L23 15 L16 8 Z" fill="#33b04a" stroke="#1b6a2a" stroke-width="1.2"/><circle cx="24" cy="6" r="4" fill="#4cc860" stroke="#1b6a2a" stroke-width="1.2"/></svg>
<svg class="a" style="left:1681px;top:1276px" width="28" height="28" viewBox="0 0 28 28"><rect x="1.5" y="1.5" width="25" height="19" rx="2" fill="#eaf2fb" stroke="#2f5fa8" stroke-width="3"/><path d="M6 8 H18 M6 13 H21" stroke="#2f5fa8" stroke-width="2"/><rect x="9" y="21" width="10" height="3" fill="#2f5fa8"/><rect x="4" y="24" width="20" height="3" fill="#2f5fa8"/></svg>
<svg class="a" style="left:1724px;top:1287px" width="14" height="10" viewBox="0 0 14 10"><path d="M0 0 H14 L7 9 Z" fill="#222"/></svg>
<svg class="a" style="left:1755px;top:1276px" width="32" height="32" viewBox="0 0 32 32"><rect x="1.5" y="5" width="27" height="25" fill="#f2f6fb" stroke="#a89868" stroke-width="1.5"/><rect x="1.5" y="5" width="27" height="4" fill="#4d8ad0"/><path d="M24 0 L28 5 L32 6 L28 8 L24 13 L20 8 L16 6 L20 5 Z" fill="#f4d35e" stroke="#a88a20" stroke-width="1.2"/></svg>
<svg class="a" style="left:1800px;top:1287px" width="14" height="10" viewBox="0 0 14 10"><path d="M0 0 H14 L7 9 Z" fill="#222"/></svg>
<div class="a" style="left:1835px;top:1282px;width:19px;height:7px;box-sizing:border-box;border:1px solid #555;background:#fff"></div>
<div class="a" style="left:1874px;top:1282px;width:19px;height:19px;box-sizing:border-box;border:1px solid #555;background:#fff"></div>
<div class="a" style="left:1874px;top:1286px;width:19px;height:1px;background:#555"></div>
<div class="a" style="left:5px;top:1325px;width:1909px;height:710px;background:#fff"></div>
<div class="tS" style="left:9.0px;top:1333.6px;font-size:26.5px;line-height:26.5px">mianTargetConfiguration.ccxml:CIO</div>
<div class="a" style="left:8px;top:1365px;width:1904px;height:1px;background:#a0a0a0"></div>
<div class="tM" style="left:11.5px;top:1373.6px;font-size:26.4px;line-height:26.4px">[CortexA15_0] enter main()</div>
<div class="tM" style="left:11.5px;top:1409.5px;font-size:26.4px;line-height:26.4px">enter taskFxn()</div>
<div class="tM" style="left:11.5px;top:1445.4px;font-size:26.4px;line-height:26.4px">exit taskFxn()</div>
<div class="a" style="left:1875px;top:1367px;width:38px;height:629px;background:#f0f0f0"></div>
<svg class="a" style="left:1886px;top:1382px" width="16" height="12" viewBox="0 0 16 12"><path d="M2 10 L8 4 L14 10" fill="none" stroke="#c0c0c0" stroke-width="3"/></svg>
<svg class="a" style="left:1886px;top:1971px" width="16" height="12" viewBox="0 0 16 12"><path d="M2 2 L8 8 L14 2" fill="none" stroke="#c0c0c0" stroke-width="3"/></svg>
<div class="a" style="left:8px;top:1996px;width:1905px;height:38px;background:#f0f0f0"></div>
<svg class="a" style="left:20px;top:2007px" width="12" height="16" viewBox="0 0 12 16"><path d="M10 2 L4 8 L10 14" fill="none" stroke="#b8b8b8" stroke-width="3"/></svg>
<svg class="a" style="left:1849px;top:2007px" width="12" height="16" viewBox="0 0 12 16"><path d="M2 2 L8 8 L2 14" fill="none" stroke="#b8b8b8" stroke-width="3"/></svg>
<div class="a" style="left:1915px;top:1270px;width:9px;height:766px;background:#e9e9e9"></div>
<div class="a" style="left:1924px;top:1270px;width:1911px;height:766px;box-sizing:border-box;border:1px solid #e2e2e2;border-radius:5px 5px 0 0;background:#fff"></div>
<div class="a" style="left:1925px;top:1271px;width:1909px;height:54px;border-radius:4px 4px 0 0;background:linear-gradient(#e8ecf8,#dce1f2);border-bottom:1px solid #e6e6e6"></div>
<div class="a" style="left:1925px;top:1271px;width:489px;height:54px;background:#fff;border-radius:4px 4px 0 0;border-right:1px solid #ececec"></div>
<svg class="a" style="left:1935px;top:1284px" width="28" height="28" viewBox="0 0 28 28"><rect x="1" y="1" width="25" height="25" fill="#222"/><g fill="#f5e3a8"><rect x="4" y="4" width="5" height="5"/><rect x="11" y="4" width="5" height="5"/><rect x="18" y="4" width="5" height="5"/><rect x="4" y="11" width="5" height="5"/><rect x="11" y="11" width="5" height="5"/><rect x="18" y="11" width="5" height="5"/><rect x="4" y="18" width="5" height="5"/><rect x="11" y="18" width="5" height="5"/><rect x="18" y="18" width="5" height="5"/></g><rect x="3" y="26" width="25" height="2" fill="#b0a890"/></svg>
<div class="tS" style="left:1974.3px;top:1288.0px;font-size:26px;line-height:26px">ROV: smplPrnt.out - CortexA15_0</div>
<svg class="a" style="left:2378px;top:1287px" width="21" height="21" viewBox="0 0 21 21"><path d="M1 1 H5.5 L9 5 H11.5 L15 1 H19.5 V5.2 L15.2 9 V11.5 L19.5 15.5 V19.5 H15 L11.5 15.2 H9 L5.5 19.5 H1 V15.5 L5.2 11.5 V9 L1 5.2 Z" fill="#fff" stroke="#4a4a4a" stroke-width="1.3" stroke-linejoin="miter"/></svg>
<div class="a" style="left:3755px;top:1282px;width:19px;height:7px;box-sizing:border-box;border:1px solid #555;background:#fff"></div>
<div class="a" style="left:3794px;top:1282px;width:19px;height:19px;box-sizing:border-box;border:1px solid #555;background:#fff"></div>
<div class="a" style="left:3794px;top:1286px;width:19px;height:1px;background:#555"></div>
<div class="a" style="left:1925px;top:1325px;width:1983px;height:710px;background:#fff"></div>
<div class="a" style="left:2342px;top:1435px;width:1489px;height:12px;background:linear-gradient(rgba(0,0,0,0.16),rgba(0,0,0,0))"></div>
<div class="a" style="left:2342px;top:1327px;width:1489px;height:108px;background:#eaf1fb"></div>
<svg class="a" style="left:2352.4px;top:1335.3px" width="46.8" height="46.8" viewBox="0 0 24 24"><path d="M15.41 7.41L14 6l-6 6 6 6 1.41-1.41L10.83 12z" fill="#333"/></svg>
<div class="tS" style="left:2444.7px;top:1373.4px;font-size:31px;line-height:31px;color:#333">Runtime Object View</div>
<svg class="a" style="left:2832.4px;top:1364.9px" width="45.6" height="45.6" viewBox="0 0 24 24"><path d="M17.65 6.35C16.2 4.9 14.21 4 12 4c-4.42 0-7.99 3.58-7.99 8s3.57 8 7.99 8c3.73 0 6.84-2.55 7.73-6h-2.08c-.82 2.33-3.04 4-5.650 4-3.31 0-6-2.69-6-6s2.69-6 6-6c1.66 0 3.14.69 4.22 1.78L13 11h7V4l-2.35 2.35z" fill="#333"/></svg>
<svg class="a" style="left:2903.4px;top:1366.1px" width="45.6" height="45.6" viewBox="0 0 24 24"><path d="M12 6v3l4-4-4-4v3c-4.42 0-8 3.58-8 8 0 1.57.46 3.03 1.24 4.26L6.7 14.8c-.45-.83-.7-1.79-.7-2.8 0-3.31 2.69-6 6-6zm6.76 1.74L17.3 9.2c.44.84.7 1.79.7 2.8 0 3.31-2.69 6-6 6v-3l-4 4 4 4v-3c4.420 0 8-3.58 8-8 0-1.57-.46-3.03-1.24-4.26z" fill="#333"/></svg>
<svg class="a" style="left:2975px;top:1364.9px" width="45.6" height="45.6" viewBox="0 0 24 24"><path d="M19 9h-4V3H9v6H5l7 7 7-7zM5 18v2h14v-2H5z" fill="#333"/></svg>
<svg class="a" style="left:3048.3px;top:1364.9px" width="45.6" height="45.6" viewBox="0 0 24 24"><path d="M3 13h2v-2H3v2zm0 4h2v-2H3v2zm2 4v-2H3c0 1.1.89 2 2 2zM3 9h2V7H3v2zm12 12h2v-2h-2v2zm4-18H9c-1.11 0-2 .9-2 2v10c0 1.1.89 2 2 2h10c1.1 0 2-.9 2-2V5c0-1.1-.9-2-2-2zm0 12H9V5h10v10zm-8 6h2v-2h-2v2zm-4 0h2v-2H7v2z" fill="#333"/></svg>
<svg class="a" style="left:3119.5px;top:1364px" width="45.6" height="45.6" viewBox="0 0 24 24"><path d="M7 14H5v5h5v-2H7v-3zm-2-4h2V7h3V5H5v5zm12 7h-3v2h5v-5h-2v3zM14 5v2h3v3h2V5h-5z" fill="#333"/></svg>
<svg class="a" style="left:3191px;top:1364px" width="45.6" height="45.6" viewBox="0 0 24 24"><path d="M19 6.41L17.59 5 12 10.59 6.41 5 5 6.41 10.59 12 5 17.59 6.41 19 12 13.41 17.59 19 19 17.59 13.41 12z" fill="#333"/></svg>
<svg class="a" style="left:3353px;top:1363.3px" width="45.6" height="45.6" viewBox="0 0 24 24"><path d="M3 13h8V3H3v10zm0 8h8v-6H3v6zm10 0h8V11h-8v10zm0-18v6h8V3h-8z" fill="#bdbdbd"/></svg>
<svg class="a" style="left:3442.9px;top:1364px" width="45.6" height="45.6" viewBox="0 0 24 24"><path d="M20 6h-8l-2-2H4c-1.1 0-1.99.9-1.99 2L2 18c0 1.1.9 2 2 2h16c1.1 0 2-.9 2-2V8c0-1.1-.9-2-2-2zm0 12H4V8h16v10z" fill="#333"/></svg>
<svg class="a" style="left:3532.3px;top:1363.3px" width="45.6" height="45.6" viewBox="0 0 24 24"><path d="M17 3H5c-1.11 0-2 .9-2 2v14c0 1.1.89 2 2 2h14c1.1 0 2-.9 2-2V7l-4-4zm-5 16c-1.66 0-3-1.34-3-3s1.34-3 3-3 3 1.34 3 3-1.34 3-3 3zm3-10H5V5h10v4z" fill="#333"/></svg>
<svg class="a" style="left:3621.5px;top:1364px" width="45.6" height="45.6" viewBox="0 0 24 24"><path d="M6 19c0 1.1.9 2 2 2h8c1.1 0 2-.9 2-2V7H6v12zM19 4h-3.5l-1-1h-5l-1 1H5v2h14V4z" fill="#9e9e9e"/></svg>
<svg class="a" style="left:3742.9px;top:1364px" width="45.6" height="45.6" viewBox="0 0 24 24"><path d="M19.14 12.94c.04-.3.06-.61.06-.94 0-.32-.02-.64-.07-.94l2.03-1.580c.18-.14.23-.41.12-.61l-1.92-3.32c-.12-.22-.37-.29-.59-.22l-2.39.96c-.5-.38-1.03-.7-1.62-.94l-.36-2.54c-.04-.24-.24-.41-.48-.41h-3.84c-.24 0-.43.17-.47.41l-.36 2.54c-.59.24-1.13.57-1.62.94l-2.39-.96c-.22-.08-.47 0-.59.22L2.74 8.87c-.12.21-.08.47.12.61l2.03 1.58c-.05.3-.09.63-.09.94s.02.64.07.94l-2.03 1.58c-.18.14-.23.41-.12.61l1.92 3.32c.12.22.37.29.59.22l2.39-.96c.5.38 1.03.7 1.62.94l.36 2.54c.05.24.24.41.48.41h3.84c.24 0 .44-.17.47-.41l.36-2.54c.59-.24 1.13-.56 1.620-.94l2.39.96c.22.08.47 0 .59-.22l1.92-3.32c.12-.22.07-.47-.12-.61l-2.01-1.58zM12 15.6c-1.98 0-3.6-1.62-3.6-3.6s1.62-3.6 3.6-3.6 3.6 1.62 3.6 3.6-1.62 3.6-3.6 3.6z" fill="#333"/></svg>
<div class="a" style="left:1928px;top:1435px;width:414px;height:12px;background:linear-gradient(rgba(0,0,0,0.18),rgba(0,0,0,0))"></div>
<div class="a" style="left:1928px;top:1327px;width:414px;height:108px;background:#f5f5f5"></div>
<svg class="a" style="left:1942px;top:1389px" width="22" height="12" viewBox="0 0 22 12"><path d="M0 0 H22 L11 12 Z" fill="#333"/></svg>
<div class="tS" style="left:1980.7px;top:1376.8px;font-size:31px;line-height:31px;color:#333">Viewable Modules</div>
<svg class="a" style="left:2257.3px;top:1371.6px" width="45.6" height="45.6" viewBox="0 0 24 24"><path d="M10 18h4v-2h-4v2zM3 6v2h18V6H3zm3 7h12v-2H6v2z" fill="#333"/></svg>
<div class="a" style="left:1928px;top:1447px;width:376px;height:587px;overflow:hidden;background:#fff">
<div class="tS" style="left:50.0px;top:-17.5px;font-size:27px;line-height:27px;color:#212121">GateHwi</div>
<div class="tS" style="left:50.0px;top:15.8px;font-size:27px;line-height:27px;color:#212121">GateMutex</div>
<div class="tS" style="left:50.0px;top:49.0px;font-size:27px;line-height:27px;color:#212121">HeapMem</div>
<div class="tS" style="left:50.0px;top:82.3px;font-size:27px;line-height:27px;color:#212121">Hwi</div>
<div class="tS" style="left:50.0px;top:115.5px;font-size:27px;line-height:27px;color:#212121">Idle</div>
<div class="tS" style="left:50.0px;top:148.8px;font-size:27px;line-height:27px;color:#212121">LoggerBuf</div>
<div class="tS" style="left:50.0px;top:182.0px;font-size:27px;line-height:27px;color:#212121">Mmu</div>
<div class="tS" style="left:50.0px;top:215.3px;font-size:27px;line-height:27px;color:#212121">Monitor</div>
<div class="tS" style="left:50.0px;top:248.5px;font-size:27px;line-height:27px;color:#212121">Queue</div>
<div class="tS" style="left:50.0px;top:281.8px;font-size:27px;line-height:27px;color:#212121">ReentSupport</div>
<div class="tS" style="left:50.0px;top:315.0px;font-size:27px;line-height:27px;color:#212121">Registry</div>
<div class="tS" style="left:50.0px;top:348.3px;font-size:27px;line-height:27px;color:#212121">Semaphore</div>
<div class="tS" style="left:50.0px;top:381.5px;font-size:27px;line-height:27px;color:#212121">Startup</div>
<div class="tS" style="left:50.0px;top:414.8px;font-size:27px;line-height:27px;color:#212121">Swi</div>
<div class="tS" style="left:50.0px;top:448.0px;font-size:27px;line-height:27px;color:#212121">SysMin</div>
<div class="tS" style="left:50.0px;top:481.3px;font-size:27px;line-height:27px;color:#212121">System</div>
<div class="tS" style="left:50.0px;top:514.5px;font-size:27px;line-height:27px;color:#212121">Task</div>
<div class="tS" style="left:50.0px;top:547.8px;font-size:27px;line-height:27px;color:#212121">Timer</div>
</div>
<div class="a" style="left:2304px;top:1447px;width:37px;height:587px;background:#f1f1f1"></div>
<div class="a" style="left:2306px;top:1620px;width:34px;height:389px;background:#c1c1c1"></div>
<svg class="a" style="left:2313px;top:1461px" width="20" height="10" viewBox="0 0 20 10"><path d="M0 10 L10 0 L20 10 Z" fill="#505050"/></svg>
<svg class="a" style="left:2313px;top:2023px" width="20" height="10" viewBox="0 0 20 10"><path d="M0 0 L20 0 L10 10 Z" fill="#a3a3a3"/></svg>
<div class="a" style="left:2341px;top:1447px;width:14px;height:588px;background:linear-gradient(90deg,rgba(0,0,0,0.06),rgba(0,0,0,0))"></div>
<div class="a" style="left:2343.5px;top:1454px;width:694px;height:238px;background:#fdfdfd;box-shadow:0 2px 4px rgba(0,0,0,0.35),0 0 1px rgba(0,0,0,0.3)"></div>
<div class="tS" style="left:2390.0px;top:1486.8px;font-size:26px;line-height:26px;color:#111;font-weight:700">SysMin</div>
<div class="tS" style="left:2505.8px;top:1486.0px;font-size:27px;line-height:27px;color:#212121">OutputBuffer</div>
<svg class="a" style="left:2737px;top:1494px" width="22" height="11" viewBox="0 0 22 11"><path d="M0 0 H22 L11 11 Z" fill="#9e9e9e"/></svg>
<div class="a" style="left:2505px;top:1527px;width:270px;height:2px;background:#111"></div>
<svg class="a" style="left:2818.4px;top:1478.4px" width="45.6" height="45.6" viewBox="0 0 24 24"><path d="M17.65 6.35C16.2 4.9 14.21 4 12 4c-4.42 0-7.99 3.58-7.99 8s3.57 8 7.99 8c3.73 0 6.84-2.55 7.73-6h-2.08c-.82 2.33-3.04 4-5.650 4-3.31 0-6-2.69-6-6s2.69-6 6-6c1.66 0 3.14.69 4.22 1.78L13 11h7V4l-2.35 2.35z" fill="#111"/></svg>
<svg class="a" style="left:2907px;top:1479px" width="45.6" height="45.6" viewBox="0 0 24 24"><path d="M19 6.41L17.59 5 12 10.59 6.41 5 5 6.41 10.59 12 5 17.59 6.41 19 12 13.41 17.59 19 19 17.59 13.41 12z" fill="#111"/></svg>
<div class="tS" style="left:2390.0px;top:1587.8px;font-size:27px;line-height:27px;color:#212121">No data to display</div>
<div class="a" style="left:0px;top:2036px;width:3840px;height:1px;background:#fff"></div>
<div class="a" style="left:0px;top:2037px;width:3840px;height:55px;background:#e6e6e6"></div>
<div class="a" style="left:0px;top:2092px;width:3840px;height:2px;background:#1c2833"></div>
<div class="a" style="left:2548px;top:2050px;width:3px;height:4px;background:#9a9a9a"></div>
<div class="a" style="left:2548px;top:2058px;width:3px;height:4px;background:#9a9a9a"></div>
<div class="a" style="left:2548px;top:2066px;width:3px;height:4px;background:#9a9a9a"></div>
<div class="a" style="left:2548px;top:2074px;width:3px;height:4px;background:#9a9a9a"></div>
<div class="a" style="left:3275px;top:2050px;width:3px;height:4px;background:#9a9a9a"></div>
<div class="a" style="left:3275px;top:2058px;width:3px;height:4px;background:#9a9a9a"></div>
<div class="a" style="left:3275px;top:2066px;width:3px;height:4px;background:#9a9a9a"></div>
<div class="a" style="left:3275px;top:2074px;width:3px;height:4px;background:#9a9a9a"></div>
<div class="a" style="left:3744px;top:2050px;width:3px;height:4px;background:#9a9a9a"></div>
<div class="a" style="left:3744px;top:2058px;width:3px;height:4px;background:#9a9a9a"></div>
<div class="a" style="left:3744px;top:2066px;width:3px;height:4px;background:#9a9a9a"></div>
<div class="a" style="left:3744px;top:2074px;width:3px;height:4px;background:#9a9a9a"></div>
<div class="tS" style="left:3288.8px;top:2054.8px;font-size:26px;line-height:26px">ARM</div>
<div class="tS" style="left:3380.0px;top:2054.8px;font-size:26px;line-height:26px">LE</div>
<div class="tS" style="left:3442.8px;top:2054.8px;font-size:26px;line-height:26px">SYS</div>
<div class="tS" style="left:3520.8px;top:2054.8px;font-size:26px;line-height:26px">Sync</div>
<div class="tS" style="left:3608.0px;top:2054.8px;font-size:26px;line-height:26px">SEC off</div>
<div class="a" style="left:3362px;top:2042px;width:1px;height:47px;background:#a8a8a8"></div>
<div class="a" style="left:3424px;top:2042px;width:1px;height:47px;background:#a8a8a8"></div>
<div class="a" style="left:3502px;top:2042px;width:1px;height:47px;background:#a8a8a8"></div>
<div class="a" style="left:3590px;top:2042px;width:1px;height:47px;background:#a8a8a8"></div>
<div class="a" style="left:3708px;top:2042px;width:1px;height:47px;background:#a8a8a8"></div>
</body></html>
